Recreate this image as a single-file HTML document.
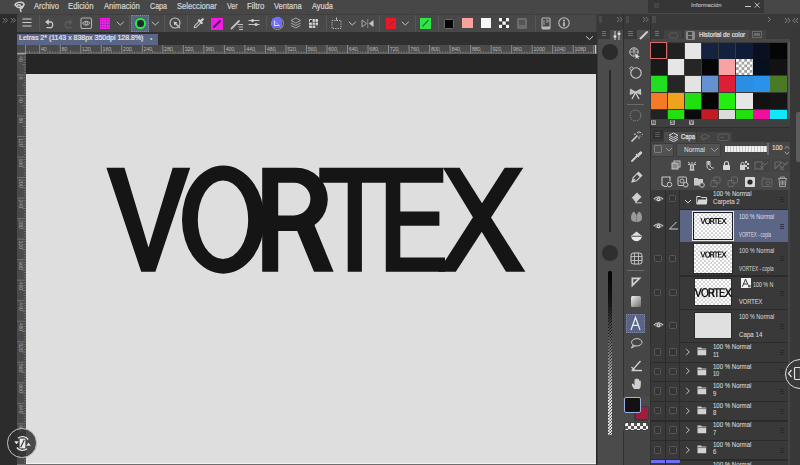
<!DOCTYPE html><html><head><meta charset="utf-8"><style>
html,body{margin:0;padding:0;}
body{width:800px;height:465px;overflow:hidden;position:relative;background:#2c2c2c;font-family:"Liberation Sans",sans-serif;}
div{position:absolute;box-sizing:border-box;}
.t{white-space:nowrap;line-height:1;}
</style></head><body>
<div style="left:0px;top:0px;width:800px;height:13.5px;background:#474747;"></div>
<div class="t" style="left:33.6px;top:2.15px;font-size:8.70px;color:#d6d6d6;-webkit-text-stroke:0.2px #d6d6d6;transform:scaleX(0.855);transform-origin:0 0;">Archivo</div>
<div class="t" style="left:68px;top:2.15px;font-size:8.70px;color:#d6d6d6;-webkit-text-stroke:0.2px #d6d6d6;transform:scaleX(0.894);transform-origin:0 0;">Edición</div>
<div class="t" style="left:103.5px;top:2.15px;font-size:8.70px;color:#d6d6d6;-webkit-text-stroke:0.2px #d6d6d6;transform:scaleX(0.879);transform-origin:0 0;">Animación</div>
<div class="t" style="left:149.8px;top:2.15px;font-size:8.70px;color:#d6d6d6;-webkit-text-stroke:0.2px #d6d6d6;transform:scaleX(0.818);transform-origin:0 0;">Capa</div>
<div class="t" style="left:176.7px;top:2.15px;font-size:8.70px;color:#d6d6d6;-webkit-text-stroke:0.2px #d6d6d6;transform:scaleX(0.878);transform-origin:0 0;">Seleccionar</div>
<div class="t" style="left:226.6px;top:2.15px;font-size:8.70px;color:#d6d6d6;-webkit-text-stroke:0.2px #d6d6d6;transform:scaleX(0.812);transform-origin:0 0;">Ver</div>
<div class="t" style="left:247.4px;top:2.15px;font-size:8.70px;color:#d6d6d6;-webkit-text-stroke:0.2px #d6d6d6;transform:scaleX(0.906);transform-origin:0 0;">Filtro</div>
<div class="t" style="left:274.4px;top:2.15px;font-size:8.70px;color:#d6d6d6;-webkit-text-stroke:0.2px #d6d6d6;transform:scaleX(0.865);transform-origin:0 0;">Ventana</div>
<div class="t" style="left:312px;top:2.15px;font-size:8.70px;color:#d6d6d6;-webkit-text-stroke:0.2px #d6d6d6;transform:scaleX(0.853);transform-origin:0 0;">Ayuda</div>
<svg style="position:absolute;left:5px;top:0px;" width="20" height="14" viewBox="0 0 20 14"><path d="M15.4,5.2 C13.6,4.4 11.4,5.2 11.7,6.5 C12.1,8 16.8,7.6 18.6,5.6 C20,3.8 17.6,2 14.8,2.2 C11.6,2.4 9.6,4 10.3,5.6 M18.2,6.2 C17.6,8 16.2,8.6 15.2,9 L16,11.6" fill="none" stroke="#d2d2d2" stroke-width="1.5" stroke-linecap="round" stroke-linejoin="round"/></svg>
<div style="left:0px;top:13.5px;width:17.3px;height:452px;background:#2c2c2c;"></div>
<svg style="position:absolute;left:1.5px;top:17px;" width="16" height="7" viewBox="0 0 16 7"><path d="M0.8 1 L3 3.3 L0.8 5.6 M3.3 1 L5.5 3.3 L3.3 5.6 M8.8 1 L11 3.3 L8.8 5.6 M11.3 1 L13.5 3.3 L11.3 5.6" fill="none" stroke="#8a8a8a" stroke-width="0.8"/></svg>
<div style="left:17.3px;top:13.5px;width:579.7px;height:18.8px;background:#484848;border-top:1px solid #3e3e3e;border-right:1px solid #3e3e3e;"></div>
<div style="left:39px;top:15px;width:0.8px;height:16px;background:#575757;"></div>
<div style="left:128.5px;top:15px;width:0.8px;height:16px;background:#575757;"></div>
<div style="left:163.5px;top:15px;width:0.8px;height:16px;background:#575757;"></div>
<div style="left:186.5px;top:15px;width:0.8px;height:16px;background:#575757;"></div>
<div style="left:265.5px;top:15px;width:0.8px;height:16px;background:#575757;"></div>
<div style="left:326px;top:15px;width:0.8px;height:16px;background:#575757;"></div>
<div style="left:378.5px;top:15px;width:0.8px;height:16px;background:#575757;"></div>
<div style="left:414.5px;top:15px;width:0.8px;height:16px;background:#575757;"></div>
<div style="left:437.5px;top:15px;width:0.8px;height:16px;background:#575757;"></div>
<div style="left:534.5px;top:15px;width:0.8px;height:16px;background:#575757;"></div>
<svg style="position:absolute;left:21.5px;top:18px;" width="10" height="9" viewBox="0 0 10 9"><path d="M0.5 1 H9.5 M0.5 4.5 H9.5 M0.5 8 H9.5" stroke="#cfcfcf" stroke-width="1.2"/></svg>
<svg style="position:absolute;left:43.5px;top:16.5px;" width="13" height="12" viewBox="0 0 13 12"><path d="M3 5 H7.5 A3.7 3.7 0 0 1 7.5 10.6 H2.5" fill="none" stroke="#c8c8c8" stroke-width="1.3"/><path d="M1 5 L4.8 2 V8 Z" fill="#c8c8c8"/></svg>
<svg style="position:absolute;left:60.5px;top:16.5px;" width="13" height="12" viewBox="0 0 13 12"><path d="M10 5 H5.5 A3.7 3.7 0 0 0 5.5 10.6 H10.5" fill="none" stroke="#5e5e5e" stroke-width="1.3"/><path d="M12 5 L8.2 2 V8 Z" fill="#5e5e5e"/></svg>
<svg style="position:absolute;left:80px;top:17px;" width="12.5" height="12" viewBox="0 0 12.5 12"><rect x="1" y="1" width="10.5" height="10.5" rx="1.5" fill="none" stroke="#b0b0b0" stroke-width="1.1"/><path d="M2.5 6.2 Q6.25 2.2 10 6.2 Q6.25 10.2 2.5 6.2 Z" fill="none" stroke="#b8b8b8" stroke-width="1"/><circle cx="6.25" cy="6.2" r="1.3" fill="none" stroke="#b8b8b8" stroke-width="0.9"/></svg>
<div style="left:99.5px;top:18px;width:10.5px;height:10.5px;background-color:#f41ee6;background-image:radial-gradient(circle,#5a2a8a 0.6px,transparent 0.9px);background-size:2.6px 2.6px;"></div>
<svg style="position:absolute;left:116px;top:21px;" width="9" height="5" viewBox="0 0 9 5"><path d="M0.8 0.8 L4.3 4 L7.8 0.8" fill="none" stroke="#c0c0c0" stroke-width="1"/></svg>
<svg style="position:absolute;left:151.2px;top:21px;" width="9" height="5" viewBox="0 0 9 5"><path d="M0.8 0.8 L4.3 4 L7.8 0.8" fill="none" stroke="#c0c0c0" stroke-width="1"/></svg>
<svg style="position:absolute;left:347.5px;top:21px;" width="9" height="5" viewBox="0 0 9 5"><path d="M0.8 0.8 L4.3 4 L7.8 0.8" fill="none" stroke="#c0c0c0" stroke-width="1"/></svg>
<svg style="position:absolute;left:401.3px;top:21px;" width="9" height="5" viewBox="0 0 9 5"><path d="M0.8 0.8 L4.3 4 L7.8 0.8" fill="none" stroke="#c0c0c0" stroke-width="1"/></svg>
<div style="left:131px;top:14.5px;width:18px;height:17px;background:#5a6585;border:1px dotted #7b86a8;"></div>
<div style="left:134.5px;top:18px;width:11.5px;height:11px;background:#4a6a48;"></div>
<div style="left:135px;top:18.3px;width:10.5px;height:10.5px;border-radius:50%;background:#25262e;border:2.3px solid #2ee84a;box-sizing:border-box;"></div>
<svg style="position:absolute;left:169px;top:16.5px;" width="13" height="13" viewBox="0 0 13 13"><circle cx="6" cy="6" r="5" fill="none" stroke="#c4c4c4" stroke-width="1.1"/><path d="M6.2 6.2 L11 11" stroke="#c8c8c8" stroke-width="1.3"/><path d="M4.6 4.6 L8.4 5.4 L5.4 8.4 Z" fill="#d0d0d0"/></svg>
<svg style="position:absolute;left:192.5px;top:17px;" width="12" height="12" viewBox="0 0 12 12"><path d="M1.2 10.8 L1.8 8.6 L6.6 3.8 L8.2 5.4 L3.4 10.2 Z" fill="none" stroke="#c4c4c4" stroke-width="1.1" stroke-linejoin="round"/><path d="M6 3.2 L8.8 6 M7.6 4.4 L9.8 2.2" stroke="#d0d0d0" stroke-width="2.2" stroke-linecap="round"/></svg>
<div style="left:211px;top:17.5px;width:12px;height:12px;background:#ee1ee0;"></div>
<svg style="position:absolute;left:211px;top:17.5px;" width="12" height="12" viewBox="0 0 12 12"><path d="M9.5 2.5 L2.5 9.5" stroke="#3a2060" stroke-width="1.8"/></svg>
<svg style="position:absolute;left:229.5px;top:17px;" width="14" height="13" viewBox="0 0 14 13"><path d="M1.5 11.5 L9 4" stroke="#c0c0c0" stroke-width="1.8" stroke-linecap="round"/><path d="M7.5 7.5 H13 M8.5 10 H13 M9 12.5 H13" stroke="#c0c0c0" stroke-width="1"/></svg>
<svg style="position:absolute;left:247.5px;top:18px;" width="12" height="9" viewBox="0 0 12 9"><path d="M0.5 2.5 H11.5 M0.5 6.5 H11.5" stroke="#c4c4c4" stroke-width="1"/><circle cx="4.5" cy="2.5" r="1.6" fill="#d0d0d0"/><circle cx="8" cy="6.5" r="1.6" fill="#d0d0d0"/></svg>
<div style="left:270.5px;top:17px;width:13px;height:13px;border-radius:50%;border:1px solid #9a9a9a;"></div>
<div style="left:272px;top:18.3px;width:10.2px;height:10.2px;background:#6e6cf8;border-radius:1.5px;"></div>
<svg style="position:absolute;left:273px;top:19.3px;" width="8" height="8" viewBox="0 0 8 8"><path d="M1.5 1.5 V6.5 H6.5" fill="none" stroke="#d8d8f8" stroke-width="1.2"/><path d="M2.5 3 L6 6" stroke="#b8b8ff" stroke-width="0.8"/></svg>
<svg style="position:absolute;left:289.5px;top:17px;" width="11.5" height="13" viewBox="0 0 11.5 13"><path d="M5.75 1 L10.5 3.5 L5.75 6 L1 3.5 Z M1 6 L5.75 8.5 L10.5 6 M1 8.5 L5.75 11 L10.5 8.5" fill="none" stroke="#a8a8a8" stroke-width="1"/></svg>
<div style="left:308.5px;top:18.5px;width:9.5px;height:9.5px;background:#d8d8d8;border-radius:1px;"></div>
<svg style="position:absolute;left:308.5px;top:18.5px;" width="9.5" height="9.5" viewBox="0 0 9.5 9.5"><path d="M3.3 0 V9.5 M6.3 0 V9.5 M0 3.3 H9.5 M0 6.3 H9.5" stroke="#505050" stroke-width="0.8"/><rect x="1" y="1" width="2" height="2" fill="#333"/><rect x="6.8" y="6.8" width="2" height="2" fill="#333"/></svg>
<svg style="position:absolute;left:331px;top:16.5px;" width="11.5" height="12.5" viewBox="0 0 11.5 12.5"><rect x="1" y="3.5" width="9" height="8" fill="none" stroke="#c0c0c0" stroke-width="1" stroke-dasharray="1.2 1.2"/><path d="M5.5 0.5 V3.5" stroke="#c0c0c0" stroke-width="1"/></svg>
<svg style="position:absolute;left:360.5px;top:18.5px;" width="13.5" height="9" viewBox="0 0 13.5 9"><path d="M1 1 L5.5 4.5 L1 8 Z" fill="none" stroke="#a8a8a8" stroke-width="1"/><path d="M6.75 0 V9" stroke="#888" stroke-width="1"/><path d="M12.5 1 L8 4.5 L12.5 8 Z" fill="#c8c8c8"/></svg>
<div style="left:385.5px;top:18px;width:10.5px;height:10.5px;background:#e81a2a;"></div>
<svg style="position:absolute;left:385.5px;top:18px;" width="10.5" height="10.5" viewBox="0 0 10.5 10.5"><path d="M7.5 3 L3 7.5" stroke="#8a1a40" stroke-width="1"/></svg>
<div style="left:420px;top:18px;width:11px;height:10.5px;background:#2ee646;"></div>
<svg style="position:absolute;left:420px;top:18px;" width="11" height="10.5" viewBox="0 0 11 10.5"><path d="M8.5 2 L2.5 8.5" stroke="#207a30" stroke-width="1.2"/></svg>
<div style="left:443.5px;top:18.5px;width:10.5px;height:10px;background:#050505;border:1px solid #6a6a6a;border-radius:1.5px;"></div>
<div style="left:462px;top:18.3px;width:10.5px;height:10.2px;background:#f8a2a0;"></div>
<div style="left:480.5px;top:18.3px;width:10.5px;height:10.2px;background:#f6f6f6;"></div>
<div style="left:499px;top:18px;width:10.2px;height:10.2px;background-color:#f4f4f4;background-image:linear-gradient(90deg,transparent 33.3%,#3a3a3a 33.3%,#3a3a3a 66.6%,transparent 66.6%);"></div>
<svg style="position:absolute;left:499px;top:18px;" width="10.2" height="10.2" viewBox="0 0 10.2 10.2"><rect x="0" y="3.4" width="3.4" height="3.4" fill="#3a3a3a"/><rect x="6.8" y="3.4" width="3.4" height="3.4" fill="#3a3a3a"/><rect x="3.4" y="3.4" width="3.4" height="3.4" fill="#f4f4f4"/></svg>
<div style="left:517px;top:18px;width:10.3px;height:10.5px;background:#6c6c6c;border-radius:1.5px;"></div>
<div style="left:519px;top:19.8px;width:6.3px;height:5px;background:#555;"></div>
<svg style="position:absolute;left:540.5px;top:16.5px;" width="10" height="13" viewBox="0 0 10 13"><rect x="1" y="1" width="8" height="11" rx="1" fill="none" stroke="#b8b8b8" stroke-width="1.1"/><rect x="1" y="9.5" width="8" height="2.5" fill="#b8b8b8"/><path d="M3 3 V8 M5 3 H7 V5 H5" fill="none" stroke="#b0b0b0" stroke-width="0.9"/></svg>
<svg style="position:absolute;left:557.5px;top:17px;" width="12" height="12" viewBox="0 0 12 12"><circle cx="6" cy="6" r="5.2" fill="none" stroke="#c0c0c0" stroke-width="1.1"/><circle cx="6" cy="3.5" r="0.9" fill="#d0d0d0"/><path d="M6 5.2 V9.3" stroke="#d0d0d0" stroke-width="1.6"/></svg>
<div style="left:17.3px;top:32.3px;width:579.7px;height:12.7px;background:#303030;"></div>
<div style="left:17px;top:33.6px;width:141px;height:11.4px;background:#5b6585;"></div>
<div class="t" style="left:19px;top:35.00px;font-size:7.10px;color:#e4e6ee;-webkit-text-stroke:0.2px #e4e6ee;transform:scaleX(0.984);transform-origin:0 0;">Letras 2* (1143 x 838px 350dpi 128.8%)</div>
<div class="t" style="left:150px;top:35.2px;font-size:7px;color:#c8ccd8;">&#8226;</div>
<svg style="position:absolute;left:585px;top:35px;" width="9" height="6" viewBox="0 0 9 6"><path d="M1 1.2 L4.5 4.6 L8 1.2" fill="none" stroke="#cfcfcf" stroke-width="1"/></svg>
<div style="left:17.3px;top:45px;width:579.7px;height:8.5px;background:#4a4a4a;"></div>
<div style="left:17.3px;top:53.3px;width:8.5px;height:412px;background:#4a4a4a;"></div>
<svg style="position:absolute;left:0px;top:0px;pointer-events:none;" width="800" height="465" viewBox="0 0 800 465"><path d="M26.88 51.5 V53" stroke="#8c8c8c" stroke-width="0.6"/><path d="M29.44 50.5 V53" stroke="#9a9a9a" stroke-width="0.6"/><path d="M32.01 51.5 V53" stroke="#8c8c8c" stroke-width="0.6"/><path d="M34.57 51.5 V53" stroke="#8c8c8c" stroke-width="0.6"/><path d="M37.14 51.5 V53" stroke="#8c8c8c" stroke-width="0.6"/><path d="M39.70 45 V53.5" stroke="#a8a8a8" stroke-width="0.7"/><path d="M42.27 51.5 V53" stroke="#8c8c8c" stroke-width="0.6"/><path d="M44.83 51.5 V53" stroke="#8c8c8c" stroke-width="0.6"/><path d="M47.40 51.5 V53" stroke="#8c8c8c" stroke-width="0.6"/><path d="M49.96 50.5 V53" stroke="#9a9a9a" stroke-width="0.6"/><path d="M52.53 51.5 V53" stroke="#8c8c8c" stroke-width="0.6"/><path d="M55.09 51.5 V53" stroke="#8c8c8c" stroke-width="0.6"/><path d="M57.66 51.5 V53" stroke="#8c8c8c" stroke-width="0.6"/><text x="41.00" y="50.6" font-size="5.4" fill="#b4b4b4" font-family="Liberation Sans" letter-spacing="-0.15">40</text><path d="M60.22 45 V53.5" stroke="#a8a8a8" stroke-width="0.7"/><path d="M62.78 51.5 V53" stroke="#8c8c8c" stroke-width="0.6"/><path d="M65.35 51.5 V53" stroke="#8c8c8c" stroke-width="0.6"/><path d="M67.91 51.5 V53" stroke="#8c8c8c" stroke-width="0.6"/><path d="M70.48 50.5 V53" stroke="#9a9a9a" stroke-width="0.6"/><path d="M73.05 51.5 V53" stroke="#8c8c8c" stroke-width="0.6"/><path d="M75.61 51.5 V53" stroke="#8c8c8c" stroke-width="0.6"/><path d="M78.17 51.5 V53" stroke="#8c8c8c" stroke-width="0.6"/><text x="61.52" y="50.6" font-size="5.4" fill="#b4b4b4" font-family="Liberation Sans" letter-spacing="-0.15">80</text><path d="M80.74 45 V53.5" stroke="#a8a8a8" stroke-width="0.7"/><path d="M83.31 51.5 V53" stroke="#8c8c8c" stroke-width="0.6"/><path d="M85.87 51.5 V53" stroke="#8c8c8c" stroke-width="0.6"/><path d="M88.44 51.5 V53" stroke="#8c8c8c" stroke-width="0.6"/><path d="M91.00 50.5 V53" stroke="#9a9a9a" stroke-width="0.6"/><path d="M93.57 51.5 V53" stroke="#8c8c8c" stroke-width="0.6"/><path d="M96.13 51.5 V53" stroke="#8c8c8c" stroke-width="0.6"/><path d="M98.70 51.5 V53" stroke="#8c8c8c" stroke-width="0.6"/><text x="82.04" y="50.6" font-size="5.4" fill="#b4b4b4" font-family="Liberation Sans" letter-spacing="-0.15">120</text><path d="M101.26 45 V53.5" stroke="#a8a8a8" stroke-width="0.7"/><path d="M103.83 51.5 V53" stroke="#8c8c8c" stroke-width="0.6"/><path d="M106.39 51.5 V53" stroke="#8c8c8c" stroke-width="0.6"/><path d="M108.96 51.5 V53" stroke="#8c8c8c" stroke-width="0.6"/><path d="M111.52 50.5 V53" stroke="#9a9a9a" stroke-width="0.6"/><path d="M114.09 51.5 V53" stroke="#8c8c8c" stroke-width="0.6"/><path d="M116.65 51.5 V53" stroke="#8c8c8c" stroke-width="0.6"/><path d="M119.22 51.5 V53" stroke="#8c8c8c" stroke-width="0.6"/><text x="102.56" y="50.6" font-size="5.4" fill="#b4b4b4" font-family="Liberation Sans" letter-spacing="-0.15">160</text><path d="M121.78 45 V53.5" stroke="#a8a8a8" stroke-width="0.7"/><path d="M124.34 51.5 V53" stroke="#8c8c8c" stroke-width="0.6"/><path d="M126.91 51.5 V53" stroke="#8c8c8c" stroke-width="0.6"/><path d="M129.47 51.5 V53" stroke="#8c8c8c" stroke-width="0.6"/><path d="M132.04 50.5 V53" stroke="#9a9a9a" stroke-width="0.6"/><path d="M134.60 51.5 V53" stroke="#8c8c8c" stroke-width="0.6"/><path d="M137.17 51.5 V53" stroke="#8c8c8c" stroke-width="0.6"/><path d="M139.74 51.5 V53" stroke="#8c8c8c" stroke-width="0.6"/><text x="123.08" y="50.6" font-size="5.4" fill="#b4b4b4" font-family="Liberation Sans" letter-spacing="-0.15">200</text><path d="M142.30 45 V53.5" stroke="#a8a8a8" stroke-width="0.7"/><path d="M144.87 51.5 V53" stroke="#8c8c8c" stroke-width="0.6"/><path d="M147.43 51.5 V53" stroke="#8c8c8c" stroke-width="0.6"/><path d="M150.00 51.5 V53" stroke="#8c8c8c" stroke-width="0.6"/><path d="M152.56 50.5 V53" stroke="#9a9a9a" stroke-width="0.6"/><path d="M155.12 51.5 V53" stroke="#8c8c8c" stroke-width="0.6"/><path d="M157.69 51.5 V53" stroke="#8c8c8c" stroke-width="0.6"/><path d="M160.25 51.5 V53" stroke="#8c8c8c" stroke-width="0.6"/><text x="143.60" y="50.6" font-size="5.4" fill="#b4b4b4" font-family="Liberation Sans" letter-spacing="-0.15">240</text><path d="M162.82 45 V53.5" stroke="#a8a8a8" stroke-width="0.7"/><path d="M165.38 51.5 V53" stroke="#8c8c8c" stroke-width="0.6"/><path d="M167.95 51.5 V53" stroke="#8c8c8c" stroke-width="0.6"/><path d="M170.51 51.5 V53" stroke="#8c8c8c" stroke-width="0.6"/><path d="M173.08 50.5 V53" stroke="#9a9a9a" stroke-width="0.6"/><path d="M175.64 51.5 V53" stroke="#8c8c8c" stroke-width="0.6"/><path d="M178.21 51.5 V53" stroke="#8c8c8c" stroke-width="0.6"/><path d="M180.77 51.5 V53" stroke="#8c8c8c" stroke-width="0.6"/><text x="164.12" y="50.6" font-size="5.4" fill="#b4b4b4" font-family="Liberation Sans" letter-spacing="-0.15">280</text><path d="M183.34 45 V53.5" stroke="#a8a8a8" stroke-width="0.7"/><path d="M185.91 51.5 V53" stroke="#8c8c8c" stroke-width="0.6"/><path d="M188.47 51.5 V53" stroke="#8c8c8c" stroke-width="0.6"/><path d="M191.03 51.5 V53" stroke="#8c8c8c" stroke-width="0.6"/><path d="M193.60 50.5 V53" stroke="#9a9a9a" stroke-width="0.6"/><path d="M196.16 51.5 V53" stroke="#8c8c8c" stroke-width="0.6"/><path d="M198.73 51.5 V53" stroke="#8c8c8c" stroke-width="0.6"/><path d="M201.30 51.5 V53" stroke="#8c8c8c" stroke-width="0.6"/><text x="184.64" y="50.6" font-size="5.4" fill="#b4b4b4" font-family="Liberation Sans" letter-spacing="-0.15">320</text><path d="M203.86 45 V53.5" stroke="#a8a8a8" stroke-width="0.7"/><path d="M206.43 51.5 V53" stroke="#8c8c8c" stroke-width="0.6"/><path d="M208.99 51.5 V53" stroke="#8c8c8c" stroke-width="0.6"/><path d="M211.56 51.5 V53" stroke="#8c8c8c" stroke-width="0.6"/><path d="M214.12 50.5 V53" stroke="#9a9a9a" stroke-width="0.6"/><path d="M216.69 51.5 V53" stroke="#8c8c8c" stroke-width="0.6"/><path d="M219.25 51.5 V53" stroke="#8c8c8c" stroke-width="0.6"/><path d="M221.81 51.5 V53" stroke="#8c8c8c" stroke-width="0.6"/><text x="205.16" y="50.6" font-size="5.4" fill="#b4b4b4" font-family="Liberation Sans" letter-spacing="-0.15">360</text><path d="M224.38 45 V53.5" stroke="#a8a8a8" stroke-width="0.7"/><path d="M226.94 51.5 V53" stroke="#8c8c8c" stroke-width="0.6"/><path d="M229.51 51.5 V53" stroke="#8c8c8c" stroke-width="0.6"/><path d="M232.07 51.5 V53" stroke="#8c8c8c" stroke-width="0.6"/><path d="M234.64 50.5 V53" stroke="#9a9a9a" stroke-width="0.6"/><path d="M237.20 51.5 V53" stroke="#8c8c8c" stroke-width="0.6"/><path d="M239.77 51.5 V53" stroke="#8c8c8c" stroke-width="0.6"/><path d="M242.33 51.5 V53" stroke="#8c8c8c" stroke-width="0.6"/><text x="225.68" y="50.6" font-size="5.4" fill="#b4b4b4" font-family="Liberation Sans" letter-spacing="-0.15">400</text><path d="M244.90 45 V53.5" stroke="#a8a8a8" stroke-width="0.7"/><path d="M247.47 51.5 V53" stroke="#8c8c8c" stroke-width="0.6"/><path d="M250.03 51.5 V53" stroke="#8c8c8c" stroke-width="0.6"/><path d="M252.59 51.5 V53" stroke="#8c8c8c" stroke-width="0.6"/><path d="M255.16 50.5 V53" stroke="#9a9a9a" stroke-width="0.6"/><path d="M257.73 51.5 V53" stroke="#8c8c8c" stroke-width="0.6"/><path d="M260.29 51.5 V53" stroke="#8c8c8c" stroke-width="0.6"/><path d="M262.86 51.5 V53" stroke="#8c8c8c" stroke-width="0.6"/><text x="246.20" y="50.6" font-size="5.4" fill="#b4b4b4" font-family="Liberation Sans" letter-spacing="-0.15">440</text><path d="M265.42 45 V53.5" stroke="#a8a8a8" stroke-width="0.7"/><path d="M267.99 51.5 V53" stroke="#8c8c8c" stroke-width="0.6"/><path d="M270.55 51.5 V53" stroke="#8c8c8c" stroke-width="0.6"/><path d="M273.12 51.5 V53" stroke="#8c8c8c" stroke-width="0.6"/><path d="M275.68 50.5 V53" stroke="#9a9a9a" stroke-width="0.6"/><path d="M278.25 51.5 V53" stroke="#8c8c8c" stroke-width="0.6"/><path d="M280.81 51.5 V53" stroke="#8c8c8c" stroke-width="0.6"/><path d="M283.38 51.5 V53" stroke="#8c8c8c" stroke-width="0.6"/><text x="266.72" y="50.6" font-size="5.4" fill="#b4b4b4" font-family="Liberation Sans" letter-spacing="-0.15">480</text><path d="M285.94 45 V53.5" stroke="#a8a8a8" stroke-width="0.7"/><path d="M288.50 51.5 V53" stroke="#8c8c8c" stroke-width="0.6"/><path d="M291.07 51.5 V53" stroke="#8c8c8c" stroke-width="0.6"/><path d="M293.63 51.5 V53" stroke="#8c8c8c" stroke-width="0.6"/><path d="M296.20 50.5 V53" stroke="#9a9a9a" stroke-width="0.6"/><path d="M298.76 51.5 V53" stroke="#8c8c8c" stroke-width="0.6"/><path d="M301.33 51.5 V53" stroke="#8c8c8c" stroke-width="0.6"/><path d="M303.89 51.5 V53" stroke="#8c8c8c" stroke-width="0.6"/><text x="287.24" y="50.6" font-size="5.4" fill="#b4b4b4" font-family="Liberation Sans" letter-spacing="-0.15">520</text><path d="M306.46 45 V53.5" stroke="#a8a8a8" stroke-width="0.7"/><path d="M309.02 51.5 V53" stroke="#8c8c8c" stroke-width="0.6"/><path d="M311.59 51.5 V53" stroke="#8c8c8c" stroke-width="0.6"/><path d="M314.15 51.5 V53" stroke="#8c8c8c" stroke-width="0.6"/><path d="M316.72 50.5 V53" stroke="#9a9a9a" stroke-width="0.6"/><path d="M319.28 51.5 V53" stroke="#8c8c8c" stroke-width="0.6"/><path d="M321.85 51.5 V53" stroke="#8c8c8c" stroke-width="0.6"/><path d="M324.41 51.5 V53" stroke="#8c8c8c" stroke-width="0.6"/><text x="307.76" y="50.6" font-size="5.4" fill="#b4b4b4" font-family="Liberation Sans" letter-spacing="-0.15">560</text><path d="M326.98 45 V53.5" stroke="#a8a8a8" stroke-width="0.7"/><path d="M329.55 51.5 V53" stroke="#8c8c8c" stroke-width="0.6"/><path d="M332.11 51.5 V53" stroke="#8c8c8c" stroke-width="0.6"/><path d="M334.68 51.5 V53" stroke="#8c8c8c" stroke-width="0.6"/><path d="M337.24 50.5 V53" stroke="#9a9a9a" stroke-width="0.6"/><path d="M339.81 51.5 V53" stroke="#8c8c8c" stroke-width="0.6"/><path d="M342.37 51.5 V53" stroke="#8c8c8c" stroke-width="0.6"/><path d="M344.94 51.5 V53" stroke="#8c8c8c" stroke-width="0.6"/><text x="328.28" y="50.6" font-size="5.4" fill="#b4b4b4" font-family="Liberation Sans" letter-spacing="-0.15">600</text><path d="M347.50 45 V53.5" stroke="#a8a8a8" stroke-width="0.7"/><path d="M350.06 51.5 V53" stroke="#8c8c8c" stroke-width="0.6"/><path d="M352.63 51.5 V53" stroke="#8c8c8c" stroke-width="0.6"/><path d="M355.19 51.5 V53" stroke="#8c8c8c" stroke-width="0.6"/><path d="M357.76 50.5 V53" stroke="#9a9a9a" stroke-width="0.6"/><path d="M360.32 51.5 V53" stroke="#8c8c8c" stroke-width="0.6"/><path d="M362.89 51.5 V53" stroke="#8c8c8c" stroke-width="0.6"/><path d="M365.45 51.5 V53" stroke="#8c8c8c" stroke-width="0.6"/><text x="348.80" y="50.6" font-size="5.4" fill="#b4b4b4" font-family="Liberation Sans" letter-spacing="-0.15">640</text><path d="M368.02 45 V53.5" stroke="#a8a8a8" stroke-width="0.7"/><path d="M370.58 51.5 V53" stroke="#8c8c8c" stroke-width="0.6"/><path d="M373.15 51.5 V53" stroke="#8c8c8c" stroke-width="0.6"/><path d="M375.71 51.5 V53" stroke="#8c8c8c" stroke-width="0.6"/><path d="M378.28 50.5 V53" stroke="#9a9a9a" stroke-width="0.6"/><path d="M380.84 51.5 V53" stroke="#8c8c8c" stroke-width="0.6"/><path d="M383.41 51.5 V53" stroke="#8c8c8c" stroke-width="0.6"/><path d="M385.97 51.5 V53" stroke="#8c8c8c" stroke-width="0.6"/><text x="369.32" y="50.6" font-size="5.4" fill="#b4b4b4" font-family="Liberation Sans" letter-spacing="-0.15">680</text><path d="M388.54 45 V53.5" stroke="#a8a8a8" stroke-width="0.7"/><path d="M391.11 51.5 V53" stroke="#8c8c8c" stroke-width="0.6"/><path d="M393.67 51.5 V53" stroke="#8c8c8c" stroke-width="0.6"/><path d="M396.24 51.5 V53" stroke="#8c8c8c" stroke-width="0.6"/><path d="M398.80 50.5 V53" stroke="#9a9a9a" stroke-width="0.6"/><path d="M401.37 51.5 V53" stroke="#8c8c8c" stroke-width="0.6"/><path d="M403.93 51.5 V53" stroke="#8c8c8c" stroke-width="0.6"/><path d="M406.50 51.5 V53" stroke="#8c8c8c" stroke-width="0.6"/><text x="389.84" y="50.6" font-size="5.4" fill="#b4b4b4" font-family="Liberation Sans" letter-spacing="-0.15">720</text><path d="M409.06 45 V53.5" stroke="#a8a8a8" stroke-width="0.7"/><path d="M411.62 51.5 V53" stroke="#8c8c8c" stroke-width="0.6"/><path d="M414.19 51.5 V53" stroke="#8c8c8c" stroke-width="0.6"/><path d="M416.75 51.5 V53" stroke="#8c8c8c" stroke-width="0.6"/><path d="M419.32 50.5 V53" stroke="#9a9a9a" stroke-width="0.6"/><path d="M421.88 51.5 V53" stroke="#8c8c8c" stroke-width="0.6"/><path d="M424.45 51.5 V53" stroke="#8c8c8c" stroke-width="0.6"/><path d="M427.01 51.5 V53" stroke="#8c8c8c" stroke-width="0.6"/><text x="410.36" y="50.6" font-size="5.4" fill="#b4b4b4" font-family="Liberation Sans" letter-spacing="-0.15">760</text><path d="M429.58 45 V53.5" stroke="#a8a8a8" stroke-width="0.7"/><path d="M432.14 51.5 V53" stroke="#8c8c8c" stroke-width="0.6"/><path d="M434.71 51.5 V53" stroke="#8c8c8c" stroke-width="0.6"/><path d="M437.27 51.5 V53" stroke="#8c8c8c" stroke-width="0.6"/><path d="M439.84 50.5 V53" stroke="#9a9a9a" stroke-width="0.6"/><path d="M442.40 51.5 V53" stroke="#8c8c8c" stroke-width="0.6"/><path d="M444.97 51.5 V53" stroke="#8c8c8c" stroke-width="0.6"/><path d="M447.53 51.5 V53" stroke="#8c8c8c" stroke-width="0.6"/><text x="430.88" y="50.6" font-size="5.4" fill="#b4b4b4" font-family="Liberation Sans" letter-spacing="-0.15">800</text><path d="M450.10 45 V53.5" stroke="#a8a8a8" stroke-width="0.7"/><path d="M452.67 51.5 V53" stroke="#8c8c8c" stroke-width="0.6"/><path d="M455.23 51.5 V53" stroke="#8c8c8c" stroke-width="0.6"/><path d="M457.80 51.5 V53" stroke="#8c8c8c" stroke-width="0.6"/><path d="M460.36 50.5 V53" stroke="#9a9a9a" stroke-width="0.6"/><path d="M462.93 51.5 V53" stroke="#8c8c8c" stroke-width="0.6"/><path d="M465.49 51.5 V53" stroke="#8c8c8c" stroke-width="0.6"/><path d="M468.06 51.5 V53" stroke="#8c8c8c" stroke-width="0.6"/><text x="451.40" y="50.6" font-size="5.4" fill="#b4b4b4" font-family="Liberation Sans" letter-spacing="-0.15">840</text><path d="M470.62 45 V53.5" stroke="#a8a8a8" stroke-width="0.7"/><path d="M473.19 51.5 V53" stroke="#8c8c8c" stroke-width="0.6"/><path d="M475.75 51.5 V53" stroke="#8c8c8c" stroke-width="0.6"/><path d="M478.31 51.5 V53" stroke="#8c8c8c" stroke-width="0.6"/><path d="M480.88 50.5 V53" stroke="#9a9a9a" stroke-width="0.6"/><path d="M483.44 51.5 V53" stroke="#8c8c8c" stroke-width="0.6"/><path d="M486.01 51.5 V53" stroke="#8c8c8c" stroke-width="0.6"/><path d="M488.57 51.5 V53" stroke="#8c8c8c" stroke-width="0.6"/><text x="471.92" y="50.6" font-size="5.4" fill="#b4b4b4" font-family="Liberation Sans" letter-spacing="-0.15">880</text><path d="M491.14 45 V53.5" stroke="#a8a8a8" stroke-width="0.7"/><path d="M493.70 51.5 V53" stroke="#8c8c8c" stroke-width="0.6"/><path d="M496.27 51.5 V53" stroke="#8c8c8c" stroke-width="0.6"/><path d="M498.83 51.5 V53" stroke="#8c8c8c" stroke-width="0.6"/><path d="M501.40 50.5 V53" stroke="#9a9a9a" stroke-width="0.6"/><path d="M503.96 51.5 V53" stroke="#8c8c8c" stroke-width="0.6"/><path d="M506.53 51.5 V53" stroke="#8c8c8c" stroke-width="0.6"/><path d="M509.09 51.5 V53" stroke="#8c8c8c" stroke-width="0.6"/><text x="492.44" y="50.6" font-size="5.4" fill="#b4b4b4" font-family="Liberation Sans" letter-spacing="-0.15">920</text><path d="M511.66 45 V53.5" stroke="#a8a8a8" stroke-width="0.7"/><path d="M514.23 51.5 V53" stroke="#8c8c8c" stroke-width="0.6"/><path d="M516.79 51.5 V53" stroke="#8c8c8c" stroke-width="0.6"/><path d="M519.36 51.5 V53" stroke="#8c8c8c" stroke-width="0.6"/><path d="M521.92 50.5 V53" stroke="#9a9a9a" stroke-width="0.6"/><path d="M524.49 51.5 V53" stroke="#8c8c8c" stroke-width="0.6"/><path d="M527.05 51.5 V53" stroke="#8c8c8c" stroke-width="0.6"/><path d="M529.62 51.5 V53" stroke="#8c8c8c" stroke-width="0.6"/><text x="512.96" y="50.6" font-size="5.4" fill="#b4b4b4" font-family="Liberation Sans" letter-spacing="-0.15">960</text><path d="M532.18 45 V53.5" stroke="#a8a8a8" stroke-width="0.7"/><path d="M534.75 51.5 V53" stroke="#8c8c8c" stroke-width="0.6"/><path d="M537.31 51.5 V53" stroke="#8c8c8c" stroke-width="0.6"/><path d="M539.88 51.5 V53" stroke="#8c8c8c" stroke-width="0.6"/><path d="M542.44 50.5 V53" stroke="#9a9a9a" stroke-width="0.6"/><path d="M545.00 51.5 V53" stroke="#8c8c8c" stroke-width="0.6"/><path d="M547.57 51.5 V53" stroke="#8c8c8c" stroke-width="0.6"/><path d="M550.13 51.5 V53" stroke="#8c8c8c" stroke-width="0.6"/><text x="533.48" y="50.6" font-size="5.4" fill="#b4b4b4" font-family="Liberation Sans" letter-spacing="-0.15">1000</text><path d="M552.70 45 V53.5" stroke="#a8a8a8" stroke-width="0.7"/><path d="M555.26 51.5 V53" stroke="#8c8c8c" stroke-width="0.6"/><path d="M557.83 51.5 V53" stroke="#8c8c8c" stroke-width="0.6"/><path d="M560.39 51.5 V53" stroke="#8c8c8c" stroke-width="0.6"/><path d="M562.96 50.5 V53" stroke="#9a9a9a" stroke-width="0.6"/><path d="M565.52 51.5 V53" stroke="#8c8c8c" stroke-width="0.6"/><path d="M568.09 51.5 V53" stroke="#8c8c8c" stroke-width="0.6"/><path d="M570.65 51.5 V53" stroke="#8c8c8c" stroke-width="0.6"/><text x="554.00" y="50.6" font-size="5.4" fill="#b4b4b4" font-family="Liberation Sans" letter-spacing="-0.15">1040</text><path d="M573.22 45 V53.5" stroke="#a8a8a8" stroke-width="0.7"/><path d="M575.78 51.5 V53" stroke="#8c8c8c" stroke-width="0.6"/><path d="M578.35 51.5 V53" stroke="#8c8c8c" stroke-width="0.6"/><path d="M580.91 51.5 V53" stroke="#8c8c8c" stroke-width="0.6"/><path d="M583.48 50.5 V53" stroke="#9a9a9a" stroke-width="0.6"/><path d="M586.04 51.5 V53" stroke="#8c8c8c" stroke-width="0.6"/><path d="M588.61 51.5 V53" stroke="#8c8c8c" stroke-width="0.6"/><path d="M591.17 51.5 V53" stroke="#8c8c8c" stroke-width="0.6"/><text x="574.52" y="50.6" font-size="5.4" fill="#b4b4b4" font-family="Liberation Sans" letter-spacing="-0.15">1080</text><path d="M593.74 45 V53.5" stroke="#a8a8a8" stroke-width="0.7"/><path d="M25.8 53.2 H597" stroke="#8a8a8a" stroke-width="0.6"/><path d="M595.6 45 V53.5" stroke="#c8c8c8" stroke-width="1.2"/><path d="M25.5 45 V53.5" stroke="#a0a0a0" stroke-width="0.7"/><path d="M17.3 54.48 H25.8" stroke="#909090" stroke-width="0.6"/><path d="M23.8 57.05 H25.8" stroke="#8c8c8c" stroke-width="0.6"/><path d="M23.8 59.61 H25.8" stroke="#8c8c8c" stroke-width="0.6"/><path d="M23.8 62.18 H25.8" stroke="#8c8c8c" stroke-width="0.6"/><path d="M22.5 64.74 H25.8" stroke="#9a9a9a" stroke-width="0.6"/><path d="M23.8 67.31 H25.8" stroke="#8c8c8c" stroke-width="0.6"/><path d="M23.8 69.87 H25.8" stroke="#8c8c8c" stroke-width="0.6"/><path d="M23.8 72.44 H25.8" stroke="#8c8c8c" stroke-width="0.6"/><text transform="translate(18.9 55.88) rotate(90)" font-size="5.4" fill="#a4a4a4" font-family="Liberation Sans" letter-spacing="-0.15">40</text><path d="M17.3 75.00 H25.8" stroke="#909090" stroke-width="0.6"/><path d="M23.8 77.56 H25.8" stroke="#8c8c8c" stroke-width="0.6"/><path d="M23.8 80.13 H25.8" stroke="#8c8c8c" stroke-width="0.6"/><path d="M23.8 82.69 H25.8" stroke="#8c8c8c" stroke-width="0.6"/><path d="M22.5 85.26 H25.8" stroke="#9a9a9a" stroke-width="0.6"/><path d="M23.8 87.83 H25.8" stroke="#8c8c8c" stroke-width="0.6"/><path d="M23.8 90.39 H25.8" stroke="#8c8c8c" stroke-width="0.6"/><path d="M23.8 92.95 H25.8" stroke="#8c8c8c" stroke-width="0.6"/><text transform="translate(18.9 76.40) rotate(90)" font-size="5.4" fill="#a4a4a4" font-family="Liberation Sans" letter-spacing="-0.15">0</text><path d="M17.3 95.52 H25.8" stroke="#909090" stroke-width="0.6"/><path d="M23.8 98.09 H25.8" stroke="#8c8c8c" stroke-width="0.6"/><path d="M23.8 100.65 H25.8" stroke="#8c8c8c" stroke-width="0.6"/><path d="M23.8 103.22 H25.8" stroke="#8c8c8c" stroke-width="0.6"/><path d="M22.5 105.78 H25.8" stroke="#9a9a9a" stroke-width="0.6"/><path d="M23.8 108.35 H25.8" stroke="#8c8c8c" stroke-width="0.6"/><path d="M23.8 110.91 H25.8" stroke="#8c8c8c" stroke-width="0.6"/><path d="M23.8 113.48 H25.8" stroke="#8c8c8c" stroke-width="0.6"/><text transform="translate(18.9 96.92) rotate(90)" font-size="5.4" fill="#a4a4a4" font-family="Liberation Sans" letter-spacing="-0.15">40</text><path d="M17.3 116.04 H25.8" stroke="#909090" stroke-width="0.6"/><path d="M23.8 118.61 H25.8" stroke="#8c8c8c" stroke-width="0.6"/><path d="M23.8 121.17 H25.8" stroke="#8c8c8c" stroke-width="0.6"/><path d="M23.8 123.74 H25.8" stroke="#8c8c8c" stroke-width="0.6"/><path d="M22.5 126.30 H25.8" stroke="#9a9a9a" stroke-width="0.6"/><path d="M23.8 128.87 H25.8" stroke="#8c8c8c" stroke-width="0.6"/><path d="M23.8 131.43 H25.8" stroke="#8c8c8c" stroke-width="0.6"/><path d="M23.8 134.00 H25.8" stroke="#8c8c8c" stroke-width="0.6"/><text transform="translate(18.9 117.44) rotate(90)" font-size="5.4" fill="#a4a4a4" font-family="Liberation Sans" letter-spacing="-0.15">80</text><path d="M17.3 136.56 H25.8" stroke="#909090" stroke-width="0.6"/><path d="M23.8 139.12 H25.8" stroke="#8c8c8c" stroke-width="0.6"/><path d="M23.8 141.69 H25.8" stroke="#8c8c8c" stroke-width="0.6"/><path d="M23.8 144.25 H25.8" stroke="#8c8c8c" stroke-width="0.6"/><path d="M22.5 146.82 H25.8" stroke="#9a9a9a" stroke-width="0.6"/><path d="M23.8 149.38 H25.8" stroke="#8c8c8c" stroke-width="0.6"/><path d="M23.8 151.95 H25.8" stroke="#8c8c8c" stroke-width="0.6"/><path d="M23.8 154.51 H25.8" stroke="#8c8c8c" stroke-width="0.6"/><text transform="translate(18.9 137.96) rotate(90)" font-size="5.4" fill="#a4a4a4" font-family="Liberation Sans" letter-spacing="-0.15">120</text><path d="M17.3 157.08 H25.8" stroke="#909090" stroke-width="0.6"/><path d="M23.8 159.64 H25.8" stroke="#8c8c8c" stroke-width="0.6"/><path d="M23.8 162.21 H25.8" stroke="#8c8c8c" stroke-width="0.6"/><path d="M23.8 164.77 H25.8" stroke="#8c8c8c" stroke-width="0.6"/><path d="M22.5 167.34 H25.8" stroke="#9a9a9a" stroke-width="0.6"/><path d="M23.8 169.90 H25.8" stroke="#8c8c8c" stroke-width="0.6"/><path d="M23.8 172.47 H25.8" stroke="#8c8c8c" stroke-width="0.6"/><path d="M23.8 175.03 H25.8" stroke="#8c8c8c" stroke-width="0.6"/><text transform="translate(18.9 158.48) rotate(90)" font-size="5.4" fill="#a4a4a4" font-family="Liberation Sans" letter-spacing="-0.15">160</text><path d="M17.3 177.60 H25.8" stroke="#909090" stroke-width="0.6"/><path d="M23.8 180.17 H25.8" stroke="#8c8c8c" stroke-width="0.6"/><path d="M23.8 182.73 H25.8" stroke="#8c8c8c" stroke-width="0.6"/><path d="M23.8 185.30 H25.8" stroke="#8c8c8c" stroke-width="0.6"/><path d="M22.5 187.86 H25.8" stroke="#9a9a9a" stroke-width="0.6"/><path d="M23.8 190.43 H25.8" stroke="#8c8c8c" stroke-width="0.6"/><path d="M23.8 192.99 H25.8" stroke="#8c8c8c" stroke-width="0.6"/><path d="M23.8 195.56 H25.8" stroke="#8c8c8c" stroke-width="0.6"/><text transform="translate(18.9 179.00) rotate(90)" font-size="5.4" fill="#a4a4a4" font-family="Liberation Sans" letter-spacing="-0.15">200</text><path d="M17.3 198.12 H25.8" stroke="#909090" stroke-width="0.6"/><path d="M23.8 200.69 H25.8" stroke="#8c8c8c" stroke-width="0.6"/><path d="M23.8 203.25 H25.8" stroke="#8c8c8c" stroke-width="0.6"/><path d="M23.8 205.81 H25.8" stroke="#8c8c8c" stroke-width="0.6"/><path d="M22.5 208.38 H25.8" stroke="#9a9a9a" stroke-width="0.6"/><path d="M23.8 210.94 H25.8" stroke="#8c8c8c" stroke-width="0.6"/><path d="M23.8 213.51 H25.8" stroke="#8c8c8c" stroke-width="0.6"/><path d="M23.8 216.07 H25.8" stroke="#8c8c8c" stroke-width="0.6"/><text transform="translate(18.9 199.52) rotate(90)" font-size="5.4" fill="#a4a4a4" font-family="Liberation Sans" letter-spacing="-0.15">240</text><path d="M17.3 218.64 H25.8" stroke="#909090" stroke-width="0.6"/><path d="M23.8 221.20 H25.8" stroke="#8c8c8c" stroke-width="0.6"/><path d="M23.8 223.77 H25.8" stroke="#8c8c8c" stroke-width="0.6"/><path d="M23.8 226.33 H25.8" stroke="#8c8c8c" stroke-width="0.6"/><path d="M22.5 228.90 H25.8" stroke="#9a9a9a" stroke-width="0.6"/><path d="M23.8 231.46 H25.8" stroke="#8c8c8c" stroke-width="0.6"/><path d="M23.8 234.03 H25.8" stroke="#8c8c8c" stroke-width="0.6"/><path d="M23.8 236.59 H25.8" stroke="#8c8c8c" stroke-width="0.6"/><text transform="translate(18.9 220.04) rotate(90)" font-size="5.4" fill="#a4a4a4" font-family="Liberation Sans" letter-spacing="-0.15">280</text><path d="M17.3 239.16 H25.8" stroke="#909090" stroke-width="0.6"/><path d="M23.8 241.73 H25.8" stroke="#8c8c8c" stroke-width="0.6"/><path d="M23.8 244.29 H25.8" stroke="#8c8c8c" stroke-width="0.6"/><path d="M23.8 246.86 H25.8" stroke="#8c8c8c" stroke-width="0.6"/><path d="M22.5 249.42 H25.8" stroke="#9a9a9a" stroke-width="0.6"/><path d="M23.8 251.99 H25.8" stroke="#8c8c8c" stroke-width="0.6"/><path d="M23.8 254.55 H25.8" stroke="#8c8c8c" stroke-width="0.6"/><path d="M23.8 257.12 H25.8" stroke="#8c8c8c" stroke-width="0.6"/><text transform="translate(18.9 240.56) rotate(90)" font-size="5.4" fill="#a4a4a4" font-family="Liberation Sans" letter-spacing="-0.15">320</text><path d="M17.3 259.68 H25.8" stroke="#909090" stroke-width="0.6"/><path d="M23.8 262.25 H25.8" stroke="#8c8c8c" stroke-width="0.6"/><path d="M23.8 264.81 H25.8" stroke="#8c8c8c" stroke-width="0.6"/><path d="M23.8 267.38 H25.8" stroke="#8c8c8c" stroke-width="0.6"/><path d="M22.5 269.94 H25.8" stroke="#9a9a9a" stroke-width="0.6"/><path d="M23.8 272.50 H25.8" stroke="#8c8c8c" stroke-width="0.6"/><path d="M23.8 275.07 H25.8" stroke="#8c8c8c" stroke-width="0.6"/><path d="M23.8 277.63 H25.8" stroke="#8c8c8c" stroke-width="0.6"/><text transform="translate(18.9 261.08) rotate(90)" font-size="5.4" fill="#a4a4a4" font-family="Liberation Sans" letter-spacing="-0.15">360</text><path d="M17.3 280.20 H25.8" stroke="#909090" stroke-width="0.6"/><path d="M23.8 282.76 H25.8" stroke="#8c8c8c" stroke-width="0.6"/><path d="M23.8 285.33 H25.8" stroke="#8c8c8c" stroke-width="0.6"/><path d="M23.8 287.89 H25.8" stroke="#8c8c8c" stroke-width="0.6"/><path d="M22.5 290.46 H25.8" stroke="#9a9a9a" stroke-width="0.6"/><path d="M23.8 293.02 H25.8" stroke="#8c8c8c" stroke-width="0.6"/><path d="M23.8 295.59 H25.8" stroke="#8c8c8c" stroke-width="0.6"/><path d="M23.8 298.15 H25.8" stroke="#8c8c8c" stroke-width="0.6"/><text transform="translate(18.9 281.60) rotate(90)" font-size="5.4" fill="#a4a4a4" font-family="Liberation Sans" letter-spacing="-0.15">400</text><path d="M17.3 300.72 H25.8" stroke="#909090" stroke-width="0.6"/><path d="M23.8 303.29 H25.8" stroke="#8c8c8c" stroke-width="0.6"/><path d="M23.8 305.85 H25.8" stroke="#8c8c8c" stroke-width="0.6"/><path d="M23.8 308.42 H25.8" stroke="#8c8c8c" stroke-width="0.6"/><path d="M22.5 310.98 H25.8" stroke="#9a9a9a" stroke-width="0.6"/><path d="M23.8 313.55 H25.8" stroke="#8c8c8c" stroke-width="0.6"/><path d="M23.8 316.11 H25.8" stroke="#8c8c8c" stroke-width="0.6"/><path d="M23.8 318.68 H25.8" stroke="#8c8c8c" stroke-width="0.6"/><text transform="translate(18.9 302.12) rotate(90)" font-size="5.4" fill="#a4a4a4" font-family="Liberation Sans" letter-spacing="-0.15">440</text><path d="M17.3 321.24 H25.8" stroke="#909090" stroke-width="0.6"/><path d="M23.8 323.81 H25.8" stroke="#8c8c8c" stroke-width="0.6"/><path d="M23.8 326.37 H25.8" stroke="#8c8c8c" stroke-width="0.6"/><path d="M23.8 328.94 H25.8" stroke="#8c8c8c" stroke-width="0.6"/><path d="M22.5 331.50 H25.8" stroke="#9a9a9a" stroke-width="0.6"/><path d="M23.8 334.06 H25.8" stroke="#8c8c8c" stroke-width="0.6"/><path d="M23.8 336.63 H25.8" stroke="#8c8c8c" stroke-width="0.6"/><path d="M23.8 339.19 H25.8" stroke="#8c8c8c" stroke-width="0.6"/><text transform="translate(18.9 322.64) rotate(90)" font-size="5.4" fill="#a4a4a4" font-family="Liberation Sans" letter-spacing="-0.15">480</text><path d="M17.3 341.76 H25.8" stroke="#909090" stroke-width="0.6"/><path d="M23.8 344.32 H25.8" stroke="#8c8c8c" stroke-width="0.6"/><path d="M23.8 346.89 H25.8" stroke="#8c8c8c" stroke-width="0.6"/><path d="M23.8 349.45 H25.8" stroke="#8c8c8c" stroke-width="0.6"/><path d="M22.5 352.02 H25.8" stroke="#9a9a9a" stroke-width="0.6"/><path d="M23.8 354.58 H25.8" stroke="#8c8c8c" stroke-width="0.6"/><path d="M23.8 357.15 H25.8" stroke="#8c8c8c" stroke-width="0.6"/><path d="M23.8 359.71 H25.8" stroke="#8c8c8c" stroke-width="0.6"/><text transform="translate(18.9 343.16) rotate(90)" font-size="5.4" fill="#a4a4a4" font-family="Liberation Sans" letter-spacing="-0.15">520</text><path d="M17.3 362.28 H25.8" stroke="#909090" stroke-width="0.6"/><path d="M23.8 364.85 H25.8" stroke="#8c8c8c" stroke-width="0.6"/><path d="M23.8 367.41 H25.8" stroke="#8c8c8c" stroke-width="0.6"/><path d="M23.8 369.98 H25.8" stroke="#8c8c8c" stroke-width="0.6"/><path d="M22.5 372.54 H25.8" stroke="#9a9a9a" stroke-width="0.6"/><path d="M23.8 375.11 H25.8" stroke="#8c8c8c" stroke-width="0.6"/><path d="M23.8 377.67 H25.8" stroke="#8c8c8c" stroke-width="0.6"/><path d="M23.8 380.24 H25.8" stroke="#8c8c8c" stroke-width="0.6"/><text transform="translate(18.9 363.68) rotate(90)" font-size="5.4" fill="#a4a4a4" font-family="Liberation Sans" letter-spacing="-0.15">560</text><path d="M17.3 382.80 H25.8" stroke="#909090" stroke-width="0.6"/><path d="M23.8 385.37 H25.8" stroke="#8c8c8c" stroke-width="0.6"/><path d="M23.8 387.93 H25.8" stroke="#8c8c8c" stroke-width="0.6"/><path d="M23.8 390.50 H25.8" stroke="#8c8c8c" stroke-width="0.6"/><path d="M22.5 393.06 H25.8" stroke="#9a9a9a" stroke-width="0.6"/><path d="M23.8 395.62 H25.8" stroke="#8c8c8c" stroke-width="0.6"/><path d="M23.8 398.19 H25.8" stroke="#8c8c8c" stroke-width="0.6"/><path d="M23.8 400.75 H25.8" stroke="#8c8c8c" stroke-width="0.6"/><text transform="translate(18.9 384.20) rotate(90)" font-size="5.4" fill="#a4a4a4" font-family="Liberation Sans" letter-spacing="-0.15">600</text><path d="M17.3 403.32 H25.8" stroke="#909090" stroke-width="0.6"/><path d="M23.8 405.88 H25.8" stroke="#8c8c8c" stroke-width="0.6"/><path d="M23.8 408.45 H25.8" stroke="#8c8c8c" stroke-width="0.6"/><path d="M23.8 411.01 H25.8" stroke="#8c8c8c" stroke-width="0.6"/><path d="M22.5 413.58 H25.8" stroke="#9a9a9a" stroke-width="0.6"/><path d="M23.8 416.14 H25.8" stroke="#8c8c8c" stroke-width="0.6"/><path d="M23.8 418.71 H25.8" stroke="#8c8c8c" stroke-width="0.6"/><path d="M23.8 421.27 H25.8" stroke="#8c8c8c" stroke-width="0.6"/><text transform="translate(18.9 404.72) rotate(90)" font-size="5.4" fill="#a4a4a4" font-family="Liberation Sans" letter-spacing="-0.15">640</text><path d="M17.3 423.84 H25.8" stroke="#909090" stroke-width="0.6"/><path d="M23.8 426.41 H25.8" stroke="#8c8c8c" stroke-width="0.6"/><path d="M23.8 428.97 H25.8" stroke="#8c8c8c" stroke-width="0.6"/><path d="M23.8 431.54 H25.8" stroke="#8c8c8c" stroke-width="0.6"/><path d="M22.5 434.10 H25.8" stroke="#9a9a9a" stroke-width="0.6"/><path d="M23.8 436.67 H25.8" stroke="#8c8c8c" stroke-width="0.6"/><path d="M23.8 439.23 H25.8" stroke="#8c8c8c" stroke-width="0.6"/><path d="M23.8 441.80 H25.8" stroke="#8c8c8c" stroke-width="0.6"/><text transform="translate(18.9 425.24) rotate(90)" font-size="5.4" fill="#a4a4a4" font-family="Liberation Sans" letter-spacing="-0.15">680</text><path d="M17.3 444.36 H25.8" stroke="#909090" stroke-width="0.6"/><path d="M23.8 446.93 H25.8" stroke="#8c8c8c" stroke-width="0.6"/><path d="M23.8 449.49 H25.8" stroke="#8c8c8c" stroke-width="0.6"/><path d="M23.8 452.06 H25.8" stroke="#8c8c8c" stroke-width="0.6"/><path d="M22.5 454.62 H25.8" stroke="#9a9a9a" stroke-width="0.6"/><path d="M23.8 457.19 H25.8" stroke="#8c8c8c" stroke-width="0.6"/><path d="M23.8 459.75 H25.8" stroke="#8c8c8c" stroke-width="0.6"/><path d="M23.8 462.31 H25.8" stroke="#8c8c8c" stroke-width="0.6"/><text transform="translate(18.9 445.76) rotate(90)" font-size="5.4" fill="#a4a4a4" font-family="Liberation Sans" letter-spacing="-0.15">720</text><path d="M17.3 464.88 H25.8" stroke="#909090" stroke-width="0.6"/><path d="M23.8 467.44 H25.8" stroke="#8c8c8c" stroke-width="0.6"/><path d="M23.8 470.01 H25.8" stroke="#8c8c8c" stroke-width="0.6"/><path d="M23.8 472.57 H25.8" stroke="#8c8c8c" stroke-width="0.6"/><path d="M22.5 475.14 H25.8" stroke="#9a9a9a" stroke-width="0.6"/><path d="M23.8 477.70 H25.8" stroke="#8c8c8c" stroke-width="0.6"/><path d="M23.8 480.27 H25.8" stroke="#8c8c8c" stroke-width="0.6"/><path d="M23.8 482.83 H25.8" stroke="#8c8c8c" stroke-width="0.6"/><text transform="translate(18.9 466.28) rotate(90)" font-size="5.4" fill="#a4a4a4" font-family="Liberation Sans" letter-spacing="-0.15">760</text><path d="M17.3 53.3 H25.8" stroke="#c4c4c4" stroke-width="0.9"/></svg>
<div style="left:25.8px;top:53.5px;width:571px;height:412px;background:#262626;"></div>
<div style="left:25.8px;top:74px;width:570.4px;height:391px;background:#dedede;"></div>
<div style="left:596.5px;top:13.5px;width:203.5px;height:452px;background:#393939;"></div>
<div style="left:598.5px;top:16px;width:3.5px;height:7px;background:#4a4a4a;"></div>
<div style="left:625.5px;top:16px;width:3.5px;height:7px;background:#4a4a4a;"></div>
<div style="left:652px;top:16px;width:3.5px;height:7px;background:#4a4a4a;"></div>
<svg style="position:absolute;left:615.5px;top:16.3px;" width="8" height="7" viewBox="0 0 8 7"><path d="M1 1 L3.2 3.5 L1 6 M3.9 1 L6.1 3.5 L3.9 6" fill="none" stroke="#7a7a7a" stroke-width="0.9"/></svg>
<svg style="position:absolute;left:642px;top:16.3px;" width="8" height="7" viewBox="0 0 8 7"><path d="M1 1 L3.2 3.5 L1 6 M3.9 1 L6.1 3.5 L3.9 6" fill="none" stroke="#7a7a7a" stroke-width="0.9"/></svg>
<svg style="position:absolute;left:784px;top:16.5px;" width="8" height="7" viewBox="0 0 8 7"><path d="M1 1 L3.2 3.5 L1 6 M3.9 1 L6.1 3.5 L3.9 6" fill="none" stroke="#8a8a8a" stroke-width="0.9"/></svg>
<svg style="position:absolute;left:792.3px;top:16.5px;" width="8" height="7" viewBox="0 0 8 7"><path d="M3.2 1 L1 3.5 L3.2 6 M6.1 1 L3.9 3.5 L6.1 6" fill="none" stroke="#8a8a8a" stroke-width="0.9"/></svg>
<svg style="position:absolute;left:767px;top:16.3px;" width="5" height="7" viewBox="0 0 5 7"><path d="M1 1 L3.5 3.5 L1 6" fill="none" stroke="#8a8a8a" stroke-width="0.9"/></svg>
<div style="left:623.2px;top:13.5px;width:1px;height:452px;background:#2f2f2f;"></div>
<div style="left:650.2px;top:13.5px;width:1px;height:452px;background:#2f2f2f;"></div>
<div style="left:601.5px;top:31px;width:4.5px;height:0.8px;background:#707070;"></div>
<div style="left:601.5px;top:33px;width:4.5px;height:0.8px;background:#707070;"></div>
<div style="left:601.5px;top:35px;width:4.5px;height:0.8px;background:#707070;"></div>
<div style="left:610px;top:29.5px;width:13.2px;height:436px;background:#4b4b4b;"></div>
<div style="left:597.5px;top:38.6px;width:25.7px;height:426.4px;background:#4b4b4b;"></div>
<svg style="position:absolute;left:612px;top:30px;" width="10" height="11" viewBox="0 0 10 11"><path d="M3 1 V10 M7 1 V10" stroke="#d8d8d8" stroke-width="1"/><rect x="1.6" y="5.5" width="2.8" height="2" fill="#e8e8e8"/><rect x="5.6" y="2.8" width="2.8" height="2" fill="#e8e8e8"/></svg>
<div style="left:601.5px;top:43.6px;width:16.6px;height:16.6px;border-radius:50%;background:#2b2b2b;"></div>
<div style="left:601.5px;top:244.8px;width:16.6px;height:16.6px;border-radius:50%;background:#2f2f2f;"></div>
<div style="left:609px;top:69.6px;width:2px;height:162px;background:#2a2a2a;"></div>
<div style="left:608.3px;top:270.5px;width:3.6px;height:164px;border-radius:1.5px;background-color:#f2f2f2;background-image:linear-gradient(#050505,rgba(5,5,5,0.9) 20%,rgba(5,5,5,0) 80%),linear-gradient(45deg,#4a4a4a 25%,transparent 25%,transparent 75%,#4a4a4a 75%),linear-gradient(45deg,#4a4a4a 25%,transparent 25%,transparent 75%,#4a4a4a 75%);background-size:100% 100%,3px 3px,3px 3px;background-position:0 0,0 0,1.5px 1.5px;"></div>
<div style="left:628px;top:31px;width:4.5px;height:0.8px;background:#707070;"></div>
<div style="left:628px;top:33px;width:4.5px;height:0.8px;background:#707070;"></div>
<div style="left:628px;top:35px;width:4.5px;height:0.8px;background:#707070;"></div>
<div style="left:637px;top:29.5px;width:13.2px;height:9.2px;background:#4e4e4e;"></div>
<div style="left:624.2px;top:38.6px;width:26px;height:426.4px;background:#464646;"></div>
<svg style="position:absolute;left:639px;top:30px;" width="10" height="10" viewBox="0 0 10 10"><path d="M1.5 8.5 L8 2" stroke="#cfcfcf" stroke-width="2" stroke-linecap="round"/></svg>
<svg style="position:absolute;left:628.5px;top:46.5px;" width="12" height="12.5" viewBox="0 0 12 12.5"><circle cx="5" cy="5" r="4.2" fill="none" stroke="#cfcfcf" stroke-width="1"/><path d="M1 5 H9 M5 1 V9 M2.5 2.5 Q5 4 7.5 2.5" fill="none" stroke="#cfcfcf" stroke-width="0.7"/><path d="M6 6 L11.5 10 L9 10.3 L10.3 12.3 L9.3 12.6 L8 10.8 L6.3 12.3 Z" fill="#e0e0e0" stroke="#3a3a3a" stroke-width="0.4"/></svg>
<svg style="position:absolute;left:628.5px;top:66px;" width="13" height="13" viewBox="0 0 13 13"><circle cx="7" cy="7" r="5.2" fill="none" stroke="#cfcfcf" stroke-width="1.1"/><circle cx="2.6" cy="2.6" r="1.6" fill="#464646" stroke="#cfcfcf" stroke-width="0.9"/></svg>
<svg style="position:absolute;left:628.5px;top:87.5px;" width="13" height="12" viewBox="0 0 13 12"><path d="M6.5 4 L1.5 1.2 L1.2 6.5 Z M6.5 4 L11.5 1.2 L11.8 6.5 Z" fill="#bcbcbc" stroke="#cfcfcf" stroke-width="0.9" stroke-linejoin="round"/><path d="M6.5 4.5 L3 11 M6.5 4.5 L10 11" stroke="#cfcfcf" stroke-width="1.3"/></svg>
<div style="left:626.6px;top:104px;width:17.5px;height:0.8px;background:#6a6a6a;"></div>
<svg style="position:absolute;left:628.5px;top:108.5px;" width="13" height="13" viewBox="0 0 13 13"><circle cx="6.5" cy="6.5" r="5.4" fill="none" stroke="#a0a0a0" stroke-width="0.9" stroke-dasharray="1 1"/></svg>
<svg style="position:absolute;left:629.5px;top:129.5px;" width="13" height="13" viewBox="0 0 13 13"><path d="M1.5 11.5 L7.5 5.5" stroke="#cfcfcf" stroke-width="1.6"/><path d="M9 1 V3.5 M9 6.5 V9 M6.2 4.2 H3.8 M11.8 4.2 H14 M7 2 L8 3 M11 2 L10 3 M11 6.5 L10 5.5" stroke="#cfcfcf" stroke-width="0.9"/></svg>
<svg style="position:absolute;left:629.5px;top:149.5px;" width="13" height="13" viewBox="0 0 13 13"><path d="M2 11 L7.5 5.5" stroke="#cfcfcf" stroke-width="1.8" stroke-linecap="round"/><path d="M6 4 L9 7 M8 4.5 L10.5 2 A1.3 1.3 0 0 1 11.5 3 L9 5.5" fill="#cfcfcf" stroke="#cfcfcf" stroke-width="1.4"/></svg>
<svg style="position:absolute;left:629.5px;top:169.5px;" width="13" height="14" viewBox="0 0 13 14"><path d="M2 12 L3.2 7.5 L8.5 2.2 L11.8 5.5 L6.5 10.8 Z" fill="none" stroke="#cfcfcf" stroke-width="1.1"/><path d="M2 12 L4 8.5 L5.5 10 Z M8.5 2.2 L11.8 5.5 L10 7.3 L6.7 4 Z" fill="#cfcfcf"/></svg>
<svg style="position:absolute;left:629.5px;top:189.5px;" width="13" height="14" viewBox="0 0 13 14"><path d="M1.5 8 L7 2.5 L11.5 7 L6 12.5 Z" fill="#cfcfcf"/><path d="M1.5 8 L4 10.5" stroke="#464646" stroke-width="1"/><path d="M5 12.8 H12" stroke="#cfcfcf" stroke-width="0.9"/></svg>
<svg style="position:absolute;left:629.5px;top:209.5px;" width="13" height="13" viewBox="0 0 13 13"><path d="M1 8 Q1 3 4 1.5 L6.5 5 L9 1.5 Q12 3 12 8 Q12 12 6.5 12 Q1 12 1 8 Z" fill="#9a9a9a"/><path d="M6.5 5 L6.5 12" stroke="#6a6a6a" stroke-width="0.6"/></svg>
<svg style="position:absolute;left:629.5px;top:229.5px;" width="13" height="14" viewBox="0 0 13 14"><path d="M1 6 L6.5 1.5 L12 6 L6.5 10.5 Z" fill="#dcdcdc"/><path d="M1 6 L12 6 L11 9 Q6.5 13.5 2 9 Z" fill="#e8e8e8"/><path d="M1.5 6.3 H11.5" stroke="#464646" stroke-width="0.9"/></svg>
<svg style="position:absolute;left:629.5px;top:251.5px;" width="13" height="13" viewBox="0 0 13 13"><rect x="1" y="1" width="11" height="11" rx="2.5" fill="none" stroke="#cfcfcf" stroke-width="1"/><path d="M4.5 1 V12 M8.5 1 V12 M1 4.5 H12 M1 8.5 H12" stroke="#cfcfcf" stroke-width="0.8"/></svg>
<div style="left:626.6px;top:270.3px;width:17.5px;height:0.8px;background:#6a6a6a;"></div>
<svg style="position:absolute;left:629.5px;top:276px;" width="13" height="13" viewBox="0 0 13 13"><path d="M1.5 1.5 H11.5 L1.5 11.5 Z M3.3 3.3 V7.3 L7.3 3.3 Z" fill="#cfcfcf" fill-rule="evenodd"/></svg>
<div style="left:630.5px;top:296px;width:10px;height:10.5px;border-radius:1.5px;background:linear-gradient(135deg,#f0f0f0,#6e6e6e);"></div>
<div style="left:625.7px;top:313.7px;width:19px;height:19.6px;background:#5a6585;border:1px dotted #7b86a8;"></div>
<svg style="position:absolute;left:628.5px;top:314.5px;" width="13" height="18" viewBox="0 0 13 18"><path d="M2 15 L6.5 2.5 L11 15 M3.8 10.3 H9.2" fill="none" stroke="#e8eaf2" stroke-width="1.3"/></svg>
<svg style="position:absolute;left:629.5px;top:336.5px;" width="13" height="12" viewBox="0 0 13 12"><ellipse cx="6.8" cy="5.3" rx="5.2" ry="3.7" fill="none" stroke="#cfcfcf" stroke-width="1"/><path d="M3 8 L1.5 11 L5.5 8.8" fill="none" stroke="#cfcfcf" stroke-width="1"/></svg>
<svg style="position:absolute;left:629.5px;top:358.5px;" width="13" height="13" viewBox="0 0 13 13"><path d="M1.5 11.5 H12 M2.5 11 L10.5 2" stroke="#cfcfcf" stroke-width="1.3"/><path d="M1.5 8 L4.5 11" stroke="#cfcfcf" stroke-width="1.2"/></svg>
<svg style="position:absolute;left:629.5px;top:377px;" width="13" height="13" viewBox="0 0 13 13"><path d="M4 12 Q1.5 9 1.8 7 L3 6.5 L4.5 8.2 V2.5 Q5.2 1.5 6 2.5 V6 V1.8 Q6.8 0.9 7.6 1.8 V6 V2.5 Q8.4 1.6 9.2 2.5 V6.5 V4 Q10 3.2 10.8 4 V8.5 Q10.5 12 8.5 12 Z" fill="#cfcfcf"/></svg>
<div style="left:622.5px;top:395.5px;width:27.5px;height:36px;background:#4a4a4a;border-radius:3px;"></div>
<div style="left:634.3px;top:406px;width:14.5px;height:14.7px;background:#7a1a30;border:1.2px solid #3a3a3a;border-radius:2px;"></div>
<div style="left:635.5px;top:407.2px;width:12.1px;height:12.3px;background-image:radial-gradient(circle,#b02048 0.6px,transparent 0.9px);background-size:2px 2px;"></div>
<div style="left:624px;top:397px;width:16.7px;height:16px;background:#121212;border:1.2px solid #9fb0e0;border-radius:2px;"></div>
<div style="left:624.6px;top:423.4px;width:23.4px;height:6.2px;border-radius:1.5px;background-color:#f4f4f4;background-image:linear-gradient(45deg,#555 25%,transparent 25%,transparent 75%,#555 75%),linear-gradient(45deg,#555 25%,transparent 25%,transparent 75%,#555 75%);background-size:6px 6px;background-position:0 0,3px 3px;box-shadow:0 0 0 0.8px #3a3a3a;"></div>
<div style="left:654.5px;top:31px;width:4.5px;height:0.8px;background:#707070;"></div>
<div style="left:654.5px;top:33px;width:4.5px;height:0.8px;background:#707070;"></div>
<div style="left:654.5px;top:35px;width:4.5px;height:0.8px;background:#707070;"></div>
<div style="left:651.2px;top:38.6px;width:139px;height:88.4px;background:#474747;"></div>
<div style="left:664px;top:29.5px;width:17.5px;height:9.1px;background:#424242;"></div>
<div style="left:684px;top:29.5px;width:64.5px;height:9.1px;background:#4b4b4b;"></div>
<div style="left:749px;top:29.5px;width:16.5px;height:9.1px;background:#424242;"></div>
<svg style="position:absolute;left:667.5px;top:30.5px;" width="11" height="8" viewBox="0 0 11 8"><rect x="1.5" y="2" width="8" height="5" rx="1.5" fill="none" stroke="#5c5c5c" stroke-width="1"/></svg>
<div style="left:686px;top:31.2px;width:8.7px;height:8.8px;background:#8a8a8a;border-radius:1.5px;"></div>
<div style="left:688.2px;top:32.3px;width:4.3px;height:2.3px;background:#444;"></div>
<div style="left:688.2px;top:36.3px;width:4.3px;height:2.4px;background:#444;"></div>
<div class="t" style="left:698.8px;top:31.92px;font-size:6.96px;color:#e0e0e0;-webkit-text-stroke:0.2px #e0e0e0;transform:scaleX(0.892);transform-origin:0 0;">Historial de color</div>
<svg style="position:absolute;left:752px;top:31px;" width="10" height="7" viewBox="0 0 10 7"><rect x="0.5" y="0.5" width="9" height="6" fill="none" stroke="#6a6a6a" stroke-width="1"/><rect x="2" y="2" width="6" height="3" fill="#6a6a6a"/></svg>
<div style="left:650.2px;top:42.2px;width:137.5px;height:77.2px;background:#383838;"></div>
<div style="left:650.6px;top:42.6px;width:16.32px;height:16.0px;background:#141414;"></div>
<div style="left:667.72px;top:42.6px;width:16.32px;height:16.0px;background:#222222;"></div>
<div style="left:684.84px;top:42.6px;width:16.32px;height:16.0px;background:#e6e6e6;"></div>
<div style="left:701.96px;top:42.6px;width:16.32px;height:16.0px;background:#14233f;"></div>
<div style="left:719.08px;top:42.6px;width:16.32px;height:16.0px;background:#13213d;"></div>
<div style="left:736.2px;top:42.6px;width:16.32px;height:16.0px;background:#0f1c38;"></div>
<div style="left:753.32px;top:42.6px;width:16.32px;height:16.0px;background:#0a1020;"></div>
<div style="left:770.44px;top:42.6px;width:16.32px;height:16.0px;background:#050505;"></div>
<div style="left:650.6px;top:59.4px;width:16.32px;height:16.0px;background:#1a1a1a;"></div>
<div style="left:667.72px;top:59.4px;width:16.32px;height:16.0px;background:#e6e6e6;"></div>
<div style="left:684.84px;top:59.4px;width:16.32px;height:16.0px;background:#262626;"></div>
<div style="left:701.96px;top:59.4px;width:16.32px;height:16.0px;background:#060606;"></div>
<div style="left:719.08px;top:59.4px;width:16.32px;height:16.0px;background:#f8a3a3;"></div>
<div style="left:736.20px;top:59.40px;width:16.32px;height:16.00px;background-color:#fff;background-image:linear-gradient(45deg,#999 25%,transparent 25%,transparent 75%,#999 75%),linear-gradient(45deg,#999 25%,transparent 25%,transparent 75%,#999 75%);background-size:5.5px 5.5px;background-position:0 0,2.75px 2.75px;"></div>
<div style="left:753.32px;top:59.4px;width:16.32px;height:16.0px;background:#07101f;"></div>
<div style="left:770.44px;top:59.4px;width:16.32px;height:16.0px;background:#121212;"></div>
<div style="left:650.6px;top:76.2px;width:16.32px;height:16.0px;background:#23dd1f;"></div>
<div style="left:667.72px;top:76.2px;width:16.32px;height:16.0px;background:#262626;"></div>
<div style="left:684.84px;top:76.2px;width:16.32px;height:16.0px;background:#e3e3e3;"></div>
<div style="left:701.96px;top:76.2px;width:16.32px;height:16.0px;background:#6492d0;"></div>
<div style="left:719.08px;top:76.2px;width:16.32px;height:16.0px;background:#dc1f36;"></div>
<div style="left:736.2px;top:76.2px;width:16.32px;height:16.0px;background:#2a8fe2;"></div>
<div style="left:753.32px;top:76.2px;width:16.32px;height:16.0px;background:#2a92ea;"></div>
<div style="left:770.44px;top:76.2px;width:16.32px;height:16.0px;background:#4b7a26;"></div>
<div style="left:650.6px;top:93.0px;width:16.32px;height:16.0px;background:#f57a25;"></div>
<div style="left:667.72px;top:93.0px;width:16.32px;height:16.0px;background:#f0a21f;"></div>
<div style="left:684.84px;top:93.0px;width:16.32px;height:16.0px;background:#22e010;"></div>
<div style="left:701.96px;top:93.0px;width:16.32px;height:16.0px;background:#050505;"></div>
<div style="left:719.08px;top:93.0px;width:16.32px;height:16.0px;background:#22ee10;"></div>
<div style="left:736.2px;top:93.0px;width:16.32px;height:16.0px;background:#e6e6e6;"></div>
<div style="left:753.32px;top:93.0px;width:16.32px;height:16.0px;background:#121212;"></div>
<div style="left:770.44px;top:93.0px;width:16.32px;height:16.0px;background:#151515;"></div>
<div style="left:650.6px;top:109.8px;width:16.32px;height:9.6px;background:#232323;"></div>
<div style="left:667.72px;top:109.8px;width:16.32px;height:9.6px;background:#22e010;"></div>
<div style="left:684.84px;top:109.8px;width:16.32px;height:9.6px;background:#0a0a0a;"></div>
<div style="left:701.96px;top:109.8px;width:16.32px;height:9.6px;background:#c21c22;"></div>
<div style="left:719.08px;top:109.8px;width:16.32px;height:9.6px;background:#dcdcdc;"></div>
<div style="left:736.2px;top:109.8px;width:16.32px;height:9.6px;background:#22e010;"></div>
<div style="left:753.32px;top:109.8px;width:16.32px;height:9.6px;background:#f010a0;"></div>
<div style="left:770.44px;top:109.8px;width:16.32px;height:9.6px;background:#10e8f8;"></div>
<div style="left:650.4px;top:42.4px;width:16.720000000000002px;height:16.400000000000002px;background:transparent;border:1px solid #d86a66;"></div>
<div style="left:788px;top:42px;width:1.5px;height:78px;background:#5a5a5a;"></div>
<div style="left:651.2px;top:119.4px;width:139px;height:7.6px;background:#3f3f3f;"></div>
<div style="left:650.6px;top:119.8px;width:5.2px;height:5.6px;background:#a8a8a8;border-radius:0.8px;"></div>
<div class="t" style="left:651.7px;top:120.2px;font-size:5px;color:#3a3a3a;font-weight:bold;">H</div>
<div style="left:669.6px;top:119.8px;width:5.2px;height:5.6px;background:#a8a8a8;border-radius:0.8px;"></div>
<div class="t" style="left:670.7px;top:120.2px;font-size:5px;color:#3a3a3a;font-weight:bold;">S</div>
<div style="left:688.7px;top:119.8px;width:5.2px;height:5.6px;background:#a8a8a8;border-radius:0.8px;"></div>
<div class="t" style="left:689.8000000000001px;top:120.2px;font-size:5px;color:#3a3a3a;font-weight:bold;">V</div>
<div style="left:651.2px;top:126.6px;width:139px;height:1px;background:#2e2e2e;"></div>
<div style="left:651.2px;top:127.5px;width:139px;height:14px;background:#393939;"></div>
<div style="left:653px;top:130px;width:9.5px;height:8.7px;background:#303030;"></div>
<div style="left:655.3px;top:131.6px;width:5px;height:0.8px;background:#5a5a5a;"></div>
<div style="left:655.3px;top:133.6px;width:5px;height:0.8px;background:#5a5a5a;"></div>
<div style="left:655.3px;top:135.6px;width:5px;height:0.8px;background:#5a5a5a;"></div>
<div style="left:664px;top:131.5px;width:32.3px;height:10px;background:#4b4b4b;"></div>
<div style="left:696.8px;top:131.5px;width:17px;height:10px;background:#424242;"></div>
<div style="left:714.3px;top:131.5px;width:17.5px;height:10px;background:#424242;"></div>
<svg style="position:absolute;left:666.5px;top:131.5px;" width="13" height="10" viewBox="0 0 13 10"><path d="M6.5 1 L11 3.3 L6.5 5.6 L2 3.3 Z M2 5.3 L6.5 7.6 L11 5.3 M2 7.3 L6.5 9.6 L11 7.3" fill="none" stroke="#cfcfcf" stroke-width="1"/></svg>
<div class="t" style="left:680.7px;top:133.21px;font-size:7.68px;color:#e0e0e0;-webkit-text-stroke:0.25px #e0e0e0;transform:scaleX(0.762);transform-origin:0 0;">Capa</div>
<svg style="position:absolute;left:699px;top:132.5px;" width="12" height="8" viewBox="0 0 12 8"><path d="M6 1 L10.5 3.5 L6 6 L1.5 3.5 Z M1.5 5.5 L6 8" fill="none" stroke="#5e5e5e" stroke-width="1"/></svg>
<svg style="position:absolute;left:716.5px;top:132.5px;" width="13" height="8" viewBox="0 0 13 8"><rect x="1" y="1" width="11" height="6.5" rx="1" fill="none" stroke="#5e5e5e" stroke-width="1"/><path d="M3.5 4.5 H7" stroke="#5e5e5e"/></svg>
<div style="left:651.2px;top:141.5px;width:139px;height:48.2px;background:#474747;"></div>
<div style="left:651.4px;top:142.6px;width:23px;height:14.8px;background:#525252;border:1px solid #3c3c3c;border-radius:2px;"></div>
<div style="left:653.8px;top:145px;width:8px;height:8px;background:transparent;border:1px solid #7c7c7c;border-radius:1px;"></div>
<svg style="position:absolute;left:664.5px;top:147px;" width="8" height="5" viewBox="0 0 8 5"><path d="M1 1 L4 4 L7 1" fill="none" stroke="#9a9a9a" stroke-width="1"/></svg>
<div style="left:676px;top:142.6px;width:44.6px;height:14.8px;background:#525252;border:1px solid #3c3c3c;border-radius:2px;"></div>
<div class="t" style="left:684px;top:146.05px;font-size:7.39px;color:#d8d8d8;-webkit-text-stroke:0.1px #d8d8d8;transform:scaleX(0.882);transform-origin:0 0;">Normal</div>
<svg style="position:absolute;left:710px;top:147px;" width="9" height="5" viewBox="0 0 9 5"><path d="M1 1 L4.5 4.3 L8 1" fill="none" stroke="#a0a0a0" stroke-width="1"/></svg>
<div style="left:724.5px;top:145.8px;width:42.5px;height:6.5px;background:repeating-linear-gradient(90deg,#f0f0f0 0,#f0f0f0 2px,#c8c8c8 2px,#c8c8c8 3px);"></div>
<div style="left:767px;top:143.2px;width:1.8px;height:12.2px;background:#6a6a6a;"></div>
<div class="t" style="left:772px;top:144.90px;font-size:7.10px;color:#e0e0e0;-webkit-text-stroke:0.1px #e0e0e0;transform:scaleX(0.886);transform-origin:0 0;">100</div>
<svg style="position:absolute;left:783.5px;top:144.5px;" width="6" height="11" viewBox="0 0 6 11"><path d="M0.8 3.8 L3 1.3 L5.2 3.8 M0.8 6.8 L3 9.3 L5.2 6.8" fill="none" stroke="#a8a8a8" stroke-width="0.9"/></svg>
<svg style="position:absolute;left:670.5px;top:160px;" width="10" height="10" viewBox="0 0 10 10"><rect x="3" y="1" width="6" height="6" fill="none" stroke="#c8c8c8" stroke-width="1"/><rect x="1" y="3" width="6" height="6" fill="#8a8a8a" stroke="#c8c8c8" stroke-width="1"/></svg>
<svg style="position:absolute;left:687px;top:159.5px;" width="10" height="11" viewBox="0 0 10 11"><path d="M5 2 V10 M2.5 10 H7.5 M3.5 5 H6.5 V10 H3.5 Z M1 2 L3.5 4 M9 2 L6.5 4 M1 4.5 H3 M9 4.5 H7" fill="none" stroke="#c8c8c8" stroke-width="1"/></svg>
<svg style="position:absolute;left:704.5px;top:159.5px;" width="10" height="11" viewBox="0 0 10 11"><path d="M2 1.5 H5 V6 L7 8 L9 8 M2 1.5 V7 L4 9.5 H6" fill="none" stroke="#c8c8c8" stroke-width="1"/><rect x="2.5" y="2" width="2" height="3" fill="#c8c8c8"/></svg>
<svg style="position:absolute;left:722px;top:159.5px;" width="9" height="11" viewBox="0 0 9 11"><path d="M2.5 5 V3.5 A2 2 0 0 1 6.5 3.5 V5" fill="none" stroke="#d8d8d8" stroke-width="1.2"/><rect x="1" y="5" width="7" height="5" rx="0.8" fill="#d8d8d8"/></svg>
<svg style="position:absolute;left:739px;top:159.5px;" width="10" height="11" viewBox="0 0 10 11"><path d="M2 5 V4 A1.6 1.6 0 0 1 5.2 4 V5" fill="none" stroke="#d0d0d0" stroke-width="1"/><rect x="1" y="5" width="5" height="5" fill="#d0d0d0"/><rect x="6" y="1" width="2" height="2" fill="#d0d0d0"/><rect x="8" y="3" width="2" height="2" fill="#d0d0d0"/><rect x="6" y="5" width="2" height="2" fill="#d0d0d0"/><rect x="8" y="7" width="2" height="2" fill="#d0d0d0"/></svg>
<div style="left:752px;top:158.7px;width:17.7px;height:12.9px;background:#434343;"></div>
<div style="left:772px;top:158.7px;width:18px;height:12.9px;background:#434343;"></div>
<svg style="position:absolute;left:754px;top:159.5px;" width="15" height="11" viewBox="0 0 15 11"><rect x="1" y="2" width="7" height="7" fill="none" stroke="#6a6a6a" stroke-width="1.2"/><path d="M6 6 L10 10 M10 6 L6 10 M9 3 L11 5 L14 2" fill="none" stroke="#6a6a6a" stroke-width="1"/></svg>
<svg style="position:absolute;left:774px;top:159.5px;" width="15" height="11" viewBox="0 0 15 11"><path d="M1 2 H8 M1 2 V9 M1 9 L8 2 M6 6 L10 10 M10 6 L6 10 M9 3 L11 5 L14 2" fill="none" stroke="#6a6a6a" stroke-width="1.1"/></svg>
<svg style="position:absolute;left:660.5px;top:175.5px;" width="12" height="12" viewBox="0 0 12 12"><path d="M1 1 H9 V5 M1 1 V9 L4 10.5 H6" fill="none" stroke="#c8c8c8" stroke-width="1.1"/><circle cx="8.5" cy="8.5" r="2.3" fill="#474747" stroke="#c8c8c8" stroke-width="1"/></svg>
<svg style="position:absolute;left:676.5px;top:175.5px;" width="12" height="12" viewBox="0 0 12 12"><rect x="1" y="1" width="8.5" height="8.5" rx="1" fill="none" stroke="#c8c8c8" stroke-width="1"/><circle cx="5" cy="5" r="2" fill="none" stroke="#c8c8c8" stroke-width="0.9"/><circle cx="8.7" cy="8.7" r="2.3" fill="#474747" stroke="#c8c8c8" stroke-width="1"/></svg>
<svg style="position:absolute;left:692.5px;top:175.5px;" width="12" height="12" viewBox="0 0 12 12"><path d="M1 2 H4.5 L5.5 3 H10 V9.5 H1 Z" fill="#c8c8c8"/><circle cx="9" cy="9" r="2.3" fill="#474747" stroke="#c8c8c8" stroke-width="1"/></svg>
<svg style="position:absolute;left:709.5px;top:175.5px;" width="12" height="12" viewBox="0 0 12 12"><rect x="4" y="1" width="6" height="6" rx="1" fill="none" stroke="#6a6a6a" stroke-width="1"/><rect x="1" y="4.5" width="6" height="6" rx="1" fill="none" stroke="#6a6a6a" stroke-width="1"/></svg>
<svg style="position:absolute;left:726.5px;top:175.5px;" width="12" height="12" viewBox="0 0 12 12"><rect x="4.5" y="1" width="6" height="6" rx="1" fill="none" stroke="#6a6a6a" stroke-width="1"/><rect x="1" y="4.5" width="6" height="6" rx="1" fill="none" stroke="#6a6a6a" stroke-width="1"/></svg>
<svg style="position:absolute;left:743.5px;top:175.5px;" width="12" height="12" viewBox="0 0 12 12"><rect x="1" y="1" width="10" height="10" rx="1" fill="#d8d8d8"/><circle cx="6" cy="6" r="2.6" fill="#2a2a2a"/></svg>
<svg style="position:absolute;left:760.5px;top:175.5px;" width="12" height="12" viewBox="0 0 12 12"><rect x="1" y="3" width="10" height="7.5" rx="1" fill="none" stroke="#6a6a6a" stroke-width="1"/><path d="M1 2 H4" stroke="#6a6a6a"/><circle cx="7" cy="7" r="2" fill="none" stroke="#6a6a6a" stroke-width="1"/></svg>
<svg style="position:absolute;left:777px;top:175.5px;" width="11" height="12" viewBox="0 0 11 12"><path d="M1 2.5 H10 M3.5 2.5 V1 H7.5 V2.5 M2 3 L2.7 10.5 H8.3 L9 3 M4 4.5 V9 M5.5 4.5 V9 M7 4.5 V9" fill="none" stroke="#a8a8a8" stroke-width="0.9"/></svg>
<div style="left:651.2px;top:189.6px;width:139px;height:276px;background:#393939;"></div>
<div style="left:664.9px;top:189.6px;width:1.1px;height:276px;background:#2c2c2c;"></div>
<div style="left:679.2px;top:189.6px;width:1.1px;height:276px;background:#2c2c2c;"></div>
<div style="left:787.8px;top:189.6px;width:2.4px;height:276px;background:#444444;"></div>
<svg style="position:absolute;left:652.8px;top:194.5px;" width="11" height="8" viewBox="0 0 11 8"><path d="M0.8 4.2 Q5.5 -0.8 10.2 4.2" fill="none" stroke="#d4d4d4" stroke-width="1.1"/><path d="M1.5 4.5 Q5.5 7.5 9.5 4.5" fill="none" stroke="#a0a0a0" stroke-width="0.7"/><circle cx="5.5" cy="4.3" r="2" fill="#d8d8d8"/><circle cx="5.5" cy="4.3" r="0.8" fill="#444"/></svg>
<div style="left:668.7px;top:194.7px;width:7.6px;height:7.6px;background:#353535;border:1px solid #555555;border-radius:1.2px;"></div>
<svg style="position:absolute;left:683.5px;top:198.5px;" width="8" height="5" viewBox="0 0 8 5"><path d="M1 1 L4 4 L7 1" fill="none" stroke="#d0d0d0" stroke-width="1"/></svg>
<svg style="position:absolute;left:696px;top:194.5px;" width="12" height="10" viewBox="0 0 12 10"><path d="M0.8 1.5 H4.5 L5.5 2.5 H10.5 V9 H0.8 Z" fill="none" stroke="#d8d8d8" stroke-width="1"/><path d="M0.8 9 L2.5 4.5 H11.5 L10.5 9 Z" fill="#d8d8d8"/></svg>
<div class="t" style="left:713.1px;top:191.40px;font-size:7.10px;color:#d4d4d4;-webkit-text-stroke:0.1px #d4d4d4;transform:scaleX(0.858);transform-origin:0 0;">100 % Normal</div>
<div class="t" style="left:713.1px;top:198.94px;font-size:6.81px;color:#d4d4d4;-webkit-text-stroke:0.1px #d4d4d4;transform:scaleX(0.896);transform-origin:0 0;">Carpeta 2</div>
<div style="left:779.8px;top:197px;width:4px;height:1.1px;background:#2a2a2a;"></div>
<div style="left:779.8px;top:199px;width:4px;height:1.1px;background:#2a2a2a;"></div>
<div style="left:779.8px;top:201px;width:4px;height:1.1px;background:#2a2a2a;"></div>
<div style="left:679.3px;top:208.8px;width:108.5px;height:1.4px;background:#2b2b2b;"></div>
<div style="left:679.8px;top:209.5px;width:108px;height:32.5px;background:#5b6585;"></div>
<svg style="position:absolute;left:652.8px;top:222px;" width="11" height="8" viewBox="0 0 11 8"><path d="M0.8 4.2 Q5.5 -0.8 10.2 4.2" fill="none" stroke="#d4d4d4" stroke-width="1.1"/><path d="M1.5 4.5 Q5.5 7.5 9.5 4.5" fill="none" stroke="#a0a0a0" stroke-width="0.7"/><circle cx="5.5" cy="4.3" r="2" fill="#d8d8d8"/><circle cx="5.5" cy="4.3" r="0.8" fill="#444"/></svg>
<svg style="position:absolute;left:667.5px;top:220px;" width="11" height="10" viewBox="0 0 11 10"><path d="M1.5 9 H10 M1.5 9 L8.5 2" fill="none" stroke="#d0d0d0" stroke-width="1"/></svg>
<div style="left:692.4px;top:210.7px;width:41.2px;height:30.6px;background-color:#fff;background-image:linear-gradient(45deg,#d4d4d4 25%,transparent 25%,transparent 75%,#d4d4d4 75%),linear-gradient(45deg,#d4d4d4 25%,transparent 25%,transparent 75%,#d4d4d4 75%);background-size:4px 4px;background-position:0 0,2px 2px;border:1px solid #e8e8e8;"></div>
<div style="left:693.4px;top:211.7px;width:39.2px;height:28.6px;background:transparent;border:1px solid #1a1a1a;"></div>
<svg style="position:absolute;left:0;top:0" width="800" height="465" viewBox="0 0 800 465"><g fill="#111" transform="translate(700.30 218.00) scale(0.06325 0.05735) translate(-106.4 -165.6)"><path fill-rule="evenodd" d="M106.4,167.7 L124.5,167.7 L148.5,247.5 L172.7,167.7 L190.2,167.7 L155.4,271.8 L141.2,271.8 Z"/><path fill-rule="evenodd" d="M182.0,219.6 A41.2,54.0 0 1,0 264.4,219.6 A41.2,54.0 0 1,0 182.0,219.6 Z M197.8,219.8 A25.2,39.2 0 1,0 248.2,219.8 A25.2,39.2 0 1,0 197.8,219.8 Z"/><path fill-rule="evenodd" d="M262.2,167.7 L296,167.7 A31.8,31.6 0 0,1 296,230.9 L278.2,230.9 L278.2,271.8 L262.2,271.8 Z M278.2,182.7 L294,182.7 A16.4,16.35 0 0,1 294,215.4 L278.2,215.4 Z"/><path fill-rule="evenodd" d="M296,228 L312,219 L333.6,271.8 L314,271.8 Z"/><path fill-rule="evenodd" d="M319.3,167.7 L443.3,167.7 L443.3,182.7 L400.3,182.7 L400.3,211.5 L439.4,211.5 L439.4,225.7 L400.3,225.7 L400.3,257.4 L445,257.4 L445,271.8 L385.8,271.8 L385.8,182.7 L361.9,182.7 L361.9,271.8 L347.7,271.8 L347.7,182.7 L319.3,182.7 Z"/><path fill-rule="evenodd" d="M442.9,167.7 L459.6,167.7 L525.4,271.8 L506,271.8 Z"/><path fill-rule="evenodd" d="M504.7,167.7 L523.3,167.7 L455.8,271.8 L438,271.8 Z"/></g></svg>
<div class="t" style="left:738.5px;top:214.37px;font-size:6.67px;color:#d8dbe4;-webkit-text-stroke:0.05px #d8dbe4;transform:scaleX(0.833);transform-origin:0 0;">100 % Normal</div>
<div class="t" style="left:738.5px;top:232.17px;font-size:6.67px;color:#d8dbe4;-webkit-text-stroke:0.05px #d8dbe4;transform:scaleX(0.651);transform-origin:0 0;">VORTEX - copia</div>
<div style="left:779.5px;top:223.5px;width:4px;height:1.1px;background:#2f3548;"></div>
<div style="left:779.5px;top:225.5px;width:4px;height:1.1px;background:#2f3548;"></div>
<div style="left:779.5px;top:227.5px;width:4px;height:1.1px;background:#2f3548;"></div>
<div style="left:654.2px;top:254.7px;width:7.6px;height:7.6px;background:#353535;border:1px solid #555555;border-radius:1.2px;"></div>
<div style="left:668.7px;top:254.7px;width:7.6px;height:7.6px;background:#353535;border:1px solid #555555;border-radius:1.2px;"></div>
<div style="left:693.2px;top:243.3px;width:40px;height:31px;background-color:#fff;background-image:linear-gradient(45deg,#d4d4d4 25%,transparent 25%,transparent 75%,#d4d4d4 75%),linear-gradient(45deg,#d4d4d4 25%,transparent 25%,transparent 75%,#d4d4d4 75%);background-size:4px 4px;background-position:0 0,2px 2px;border:1px solid #2a2a2a;"></div>
<svg style="position:absolute;left:0;top:0" width="800" height="465" viewBox="0 0 800 465"><g fill="#111" transform="translate(700.30 251.50) scale(0.06325 0.05735) translate(-106.4 -165.6)"><path fill-rule="evenodd" d="M106.4,167.7 L124.5,167.7 L148.5,247.5 L172.7,167.7 L190.2,167.7 L155.4,271.8 L141.2,271.8 Z"/><path fill-rule="evenodd" d="M182.0,219.6 A41.2,54.0 0 1,0 264.4,219.6 A41.2,54.0 0 1,0 182.0,219.6 Z M197.8,219.8 A25.2,39.2 0 1,0 248.2,219.8 A25.2,39.2 0 1,0 197.8,219.8 Z"/><path fill-rule="evenodd" d="M262.2,167.7 L296,167.7 A31.8,31.6 0 0,1 296,230.9 L278.2,230.9 L278.2,271.8 L262.2,271.8 Z M278.2,182.7 L294,182.7 A16.4,16.35 0 0,1 294,215.4 L278.2,215.4 Z"/><path fill-rule="evenodd" d="M296,228 L312,219 L333.6,271.8 L314,271.8 Z"/><path fill-rule="evenodd" d="M319.3,167.7 L443.3,167.7 L443.3,182.7 L400.3,182.7 L400.3,211.5 L439.4,211.5 L439.4,225.7 L400.3,225.7 L400.3,257.4 L445,257.4 L445,271.8 L385.8,271.8 L385.8,182.7 L361.9,182.7 L361.9,271.8 L347.7,271.8 L347.7,182.7 L319.3,182.7 Z"/><path fill-rule="evenodd" d="M442.9,167.7 L459.6,167.7 L525.4,271.8 L506,271.8 Z"/><path fill-rule="evenodd" d="M504.7,167.7 L523.3,167.7 L455.8,271.8 L438,271.8 Z"/></g></svg>
<div class="t" style="left:738.5px;top:247.48px;font-size:7.25px;color:#d4d4d4;-webkit-text-stroke:0.05px #d4d4d4;transform:scaleX(0.767);transform-origin:0 0;">100 % Normal</div>
<div class="t" style="left:738.5px;top:265.48px;font-size:7.25px;color:#d4d4d4;-webkit-text-stroke:0.05px #d4d4d4;transform:scaleX(0.646);transform-origin:0 0;">VORTEX - copia</div>
<div style="left:779.5px;top:256px;width:4px;height:1.1px;background:#2a2a2a;"></div>
<div style="left:779.5px;top:258px;width:4px;height:1.1px;background:#2a2a2a;"></div>
<div style="left:779.5px;top:260px;width:4px;height:1.1px;background:#2a2a2a;"></div>
<div style="left:679.3px;top:275.40000000000003px;width:108.5px;height:1.4px;background:#2b2b2b;"></div>
<div style="left:653.7px;top:288.7px;width:7.6px;height:7.6px;background:#353535;border:1px solid #555555;border-radius:1.2px;"></div>
<div style="left:669.3000000000001px;top:288.7px;width:7.6px;height:7.6px;background:#353535;border:1px solid #555555;border-radius:1.2px;"></div>
<div style="left:693.6px;top:277.6px;width:38.8px;height:28.6px;background-color:#fff;background-image:linear-gradient(45deg,#d4d4d4 25%,transparent 25%,transparent 75%,#d4d4d4 75%),linear-gradient(45deg,#d4d4d4 25%,transparent 25%,transparent 75%,#d4d4d4 75%);background-size:4px 4px;background-position:0 0,2px 2px;border:1px solid #2a2a2a;"></div>
<svg style="position:absolute;left:0;top:0" width="800" height="465" viewBox="0 0 800 465"><g fill="#111" transform="translate(694.40 288.00) scale(0.09021 0.08511) translate(-106.4 -165.6)"><path fill-rule="evenodd" d="M106.4,167.7 L124.5,167.7 L148.5,247.5 L172.7,167.7 L190.2,167.7 L155.4,271.8 L141.2,271.8 Z"/><path fill-rule="evenodd" d="M182.0,219.6 A41.2,54.0 0 1,0 264.4,219.6 A41.2,54.0 0 1,0 182.0,219.6 Z M197.8,219.8 A25.2,39.2 0 1,0 248.2,219.8 A25.2,39.2 0 1,0 197.8,219.8 Z"/><path fill-rule="evenodd" d="M262.2,167.7 L296,167.7 A31.8,31.6 0 0,1 296,230.9 L278.2,230.9 L278.2,271.8 L262.2,271.8 Z M278.2,182.7 L294,182.7 A16.4,16.35 0 0,1 294,215.4 L278.2,215.4 Z"/><path fill-rule="evenodd" d="M296,228 L312,219 L333.6,271.8 L314,271.8 Z"/><path fill-rule="evenodd" d="M319.3,167.7 L443.3,167.7 L443.3,182.7 L400.3,182.7 L400.3,211.5 L439.4,211.5 L439.4,225.7 L400.3,225.7 L400.3,257.4 L445,257.4 L445,271.8 L385.8,271.8 L385.8,182.7 L361.9,182.7 L361.9,271.8 L347.7,271.8 L347.7,182.7 L319.3,182.7 Z"/><path fill-rule="evenodd" d="M442.9,167.7 L459.6,167.7 L525.4,271.8 L506,271.8 Z"/><path fill-rule="evenodd" d="M504.7,167.7 L523.3,167.7 L455.8,271.8 L438,271.8 Z"/></g></svg>
<div style="left:740.9px;top:278.2px;width:9.8px;height:9.6px;background:#f4f4f4;"></div>
<svg style="position:absolute;left:740.9px;top:278.2px;" width="10" height="10" viewBox="0 0 10 10"><path d="M1.3 8.8 L4.5 1.2 L7.4 7.6 M2.5 6 H6" fill="none" stroke="#222" stroke-width="0.9"/><rect x="7" y="7" width="2.6" height="2.4" fill="#666"/></svg>
<div class="t" style="left:753.3px;top:280.63px;font-size:7.54px;color:#d4d4d4;-webkit-text-stroke:0.05px #d4d4d4;transform:scaleX(0.706);transform-origin:0 0;">100 % N</div>
<div class="t" style="left:738.5px;top:297.83px;font-size:7.54px;color:#d4d4d4;-webkit-text-stroke:0.1px #d4d4d4;transform:scaleX(0.758);transform-origin:0 0;">VORTEX</div>
<div style="left:779.5px;top:290.5px;width:4px;height:1.1px;background:#2a2a2a;"></div>
<div style="left:779.5px;top:292.5px;width:4px;height:1.1px;background:#2a2a2a;"></div>
<div style="left:779.5px;top:294.5px;width:4px;height:1.1px;background:#2a2a2a;"></div>
<div style="left:679.3px;top:308.8px;width:108.5px;height:1.4px;background:#2b2b2b;"></div>
<svg style="position:absolute;left:652.8px;top:321.3px;" width="11" height="8" viewBox="0 0 11 8"><path d="M0.8 4.2 Q5.5 -0.8 10.2 4.2" fill="none" stroke="#d4d4d4" stroke-width="1.1"/><path d="M1.5 4.5 Q5.5 7.5 9.5 4.5" fill="none" stroke="#a0a0a0" stroke-width="0.7"/><circle cx="5.5" cy="4.3" r="2" fill="#d8d8d8"/><circle cx="5.5" cy="4.3" r="0.8" fill="#444"/></svg>
<div style="left:669.3000000000001px;top:321.7px;width:7.6px;height:7.6px;background:#353535;border:1px solid #555555;border-radius:1.2px;"></div>
<div style="left:693.6px;top:311.6px;width:38.8px;height:27.8px;background:#e0e0e0;border:1px solid #2a2a2a;"></div>
<div class="t" style="left:738.5px;top:314.12px;font-size:6.96px;color:#d4d4d4;-webkit-text-stroke:0.05px #d4d4d4;transform:scaleX(0.799);transform-origin:0 0;">100 % Normal</div>
<div class="t" style="left:738.5px;top:331.48px;font-size:7.25px;color:#d4d4d4;-webkit-text-stroke:0.1px #d4d4d4;transform:scaleX(0.854);transform-origin:0 0;">Capa 14</div>
<div style="left:779.5px;top:323.5px;width:4px;height:1.1px;background:#2a2a2a;"></div>
<div style="left:779.5px;top:325.5px;width:4px;height:1.1px;background:#2a2a2a;"></div>
<div style="left:779.5px;top:327.5px;width:4px;height:1.1px;background:#2a2a2a;"></div>
<div style="left:679.3px;top:342.0px;width:108.5px;height:1.4px;background:#2b2b2b;"></div>
<div style="left:653.7px;top:348.2px;width:7.6px;height:7.6px;background:#353535;border:1px solid #555555;border-radius:1.2px;"></div>
<div style="left:669.3000000000001px;top:348.2px;width:7.6px;height:7.6px;background:#353535;border:1px solid #555555;border-radius:1.2px;"></div>
<svg style="position:absolute;left:685px;top:347.8px;" width="6" height="8" viewBox="0 0 6 8"><path d="M1.2 1 L4.3 4 L1.2 7" fill="none" stroke="#c4c4c4" stroke-width="1"/></svg>
<svg style="position:absolute;left:696.5px;top:347.0px;" width="10" height="9" viewBox="0 0 10 9"><path d="M0.5 0.5 H4 L5 1.6 H9.2 V8.3 H0.5 Z" fill="#d2d2d2"/><path d="M0.8 2.6 H9" stroke="#3a3a3a" stroke-width="0.6"/></svg>
<div class="t" style="left:713.1px;top:344.22px;font-size:6.96px;color:#d4d4d4;-webkit-text-stroke:0.1px #d4d4d4;transform:scaleX(0.871);transform-origin:0 0;">100 % Normal</div>
<div class="t" style="left:713.1px;top:351.64px;font-size:6.81px;color:#d4d4d4;-webkit-text-stroke:0.1px #d4d4d4;transform:scaleX(0.877);transform-origin:0 0;">11</div>
<div style="left:779.8px;top:349.8px;width:4px;height:1.1px;background:#2a2a2a;"></div>
<div style="left:779.8px;top:351.8px;width:4px;height:1.1px;background:#2a2a2a;"></div>
<div style="left:779.8px;top:353.8px;width:4px;height:1.1px;background:#2a2a2a;"></div>
<div style="left:651.2px;top:361.6px;width:137px;height:1.4px;background:#2b2b2b;"></div>
<div style="left:653.7px;top:367.8px;width:7.6px;height:7.6px;background:#353535;border:1px solid #555555;border-radius:1.2px;"></div>
<div style="left:669.3000000000001px;top:367.8px;width:7.6px;height:7.6px;background:#353535;border:1px solid #555555;border-radius:1.2px;"></div>
<svg style="position:absolute;left:685px;top:367.40000000000003px;" width="6" height="8" viewBox="0 0 6 8"><path d="M1.2 1 L4.3 4 L1.2 7" fill="none" stroke="#c4c4c4" stroke-width="1"/></svg>
<svg style="position:absolute;left:696.5px;top:366.6px;" width="10" height="9" viewBox="0 0 10 9"><path d="M0.5 0.5 H4 L5 1.6 H9.2 V8.3 H0.5 Z" fill="#d2d2d2"/><path d="M0.8 2.6 H9" stroke="#3a3a3a" stroke-width="0.6"/></svg>
<div class="t" style="left:713.1px;top:363.82px;font-size:6.96px;color:#d4d4d4;-webkit-text-stroke:0.1px #d4d4d4;transform:scaleX(0.871);transform-origin:0 0;">100 % Normal</div>
<div class="t" style="left:713.1px;top:371.24px;font-size:6.81px;color:#d4d4d4;-webkit-text-stroke:0.1px #d4d4d4;transform:scaleX(0.818);transform-origin:0 0;">10</div>
<div style="left:779.8px;top:369.40000000000003px;width:4px;height:1.1px;background:#2a2a2a;"></div>
<div style="left:779.8px;top:371.40000000000003px;width:4px;height:1.1px;background:#2a2a2a;"></div>
<div style="left:779.8px;top:373.40000000000003px;width:4px;height:1.1px;background:#2a2a2a;"></div>
<div style="left:651.2px;top:381.1px;width:137px;height:1.4px;background:#2b2b2b;"></div>
<div style="left:653.7px;top:387.3px;width:7.6px;height:7.6px;background:#353535;border:1px solid #555555;border-radius:1.2px;"></div>
<div style="left:669.3000000000001px;top:387.3px;width:7.6px;height:7.6px;background:#353535;border:1px solid #555555;border-radius:1.2px;"></div>
<svg style="position:absolute;left:685px;top:386.90000000000003px;" width="6" height="8" viewBox="0 0 6 8"><path d="M1.2 1 L4.3 4 L1.2 7" fill="none" stroke="#c4c4c4" stroke-width="1"/></svg>
<svg style="position:absolute;left:696.5px;top:386.1px;" width="10" height="9" viewBox="0 0 10 9"><path d="M0.5 0.5 H4 L5 1.6 H9.2 V8.3 H0.5 Z" fill="#d2d2d2"/><path d="M0.8 2.6 H9" stroke="#3a3a3a" stroke-width="0.6"/></svg>
<div class="t" style="left:713.1px;top:383.32px;font-size:6.96px;color:#d4d4d4;-webkit-text-stroke:0.1px #d4d4d4;transform:scaleX(0.871);transform-origin:0 0;">100 % Normal</div>
<div class="t" style="left:713.1px;top:390.74px;font-size:6.81px;color:#d4d4d4;-webkit-text-stroke:0.1px #d4d4d4;transform:scaleX(0.871);transform-origin:0 0;">9</div>
<div style="left:779.8px;top:388.90000000000003px;width:4px;height:1.1px;background:#2a2a2a;"></div>
<div style="left:779.8px;top:390.90000000000003px;width:4px;height:1.1px;background:#2a2a2a;"></div>
<div style="left:779.8px;top:392.90000000000003px;width:4px;height:1.1px;background:#2a2a2a;"></div>
<div style="left:651.2px;top:400.7px;width:137px;height:1.4px;background:#2b2b2b;"></div>
<div style="left:653.7px;top:406.9px;width:7.6px;height:7.6px;background:#353535;border:1px solid #555555;border-radius:1.2px;"></div>
<div style="left:669.3000000000001px;top:406.9px;width:7.6px;height:7.6px;background:#353535;border:1px solid #555555;border-radius:1.2px;"></div>
<svg style="position:absolute;left:685px;top:406.5px;" width="6" height="8" viewBox="0 0 6 8"><path d="M1.2 1 L4.3 4 L1.2 7" fill="none" stroke="#c4c4c4" stroke-width="1"/></svg>
<svg style="position:absolute;left:696.5px;top:405.7px;" width="10" height="9" viewBox="0 0 10 9"><path d="M0.5 0.5 H4 L5 1.6 H9.2 V8.3 H0.5 Z" fill="#d2d2d2"/><path d="M0.8 2.6 H9" stroke="#3a3a3a" stroke-width="0.6"/></svg>
<div class="t" style="left:713.1px;top:402.92px;font-size:6.96px;color:#d4d4d4;-webkit-text-stroke:0.1px #d4d4d4;transform:scaleX(0.871);transform-origin:0 0;">100 % Normal</div>
<div class="t" style="left:713.1px;top:410.34px;font-size:6.81px;color:#d4d4d4;-webkit-text-stroke:0.1px #d4d4d4;transform:scaleX(0.871);transform-origin:0 0;">8</div>
<div style="left:779.8px;top:408.5px;width:4px;height:1.1px;background:#2a2a2a;"></div>
<div style="left:779.8px;top:410.5px;width:4px;height:1.1px;background:#2a2a2a;"></div>
<div style="left:779.8px;top:412.5px;width:4px;height:1.1px;background:#2a2a2a;"></div>
<div style="left:651.2px;top:420.2px;width:137px;height:1.4px;background:#2b2b2b;"></div>
<div style="left:653.7px;top:426.4px;width:7.6px;height:7.6px;background:#353535;border:1px solid #555555;border-radius:1.2px;"></div>
<div style="left:669.3000000000001px;top:426.4px;width:7.6px;height:7.6px;background:#353535;border:1px solid #555555;border-radius:1.2px;"></div>
<svg style="position:absolute;left:685px;top:426.0px;" width="6" height="8" viewBox="0 0 6 8"><path d="M1.2 1 L4.3 4 L1.2 7" fill="none" stroke="#c4c4c4" stroke-width="1"/></svg>
<svg style="position:absolute;left:696.5px;top:425.2px;" width="10" height="9" viewBox="0 0 10 9"><path d="M0.5 0.5 H4 L5 1.6 H9.2 V8.3 H0.5 Z" fill="#d2d2d2"/><path d="M0.8 2.6 H9" stroke="#3a3a3a" stroke-width="0.6"/></svg>
<div class="t" style="left:713.1px;top:422.42px;font-size:6.96px;color:#d4d4d4;-webkit-text-stroke:0.1px #d4d4d4;transform:scaleX(0.871);transform-origin:0 0;">100 % Normal</div>
<div class="t" style="left:713.1px;top:429.84px;font-size:6.81px;color:#d4d4d4;-webkit-text-stroke:0.1px #d4d4d4;transform:scaleX(0.871);transform-origin:0 0;">7</div>
<div style="left:779.8px;top:428.0px;width:4px;height:1.1px;background:#2a2a2a;"></div>
<div style="left:779.8px;top:430.0px;width:4px;height:1.1px;background:#2a2a2a;"></div>
<div style="left:779.8px;top:432.0px;width:4px;height:1.1px;background:#2a2a2a;"></div>
<div style="left:651.2px;top:439.8px;width:137px;height:1.4px;background:#2b2b2b;"></div>
<div style="left:653.7px;top:446.0px;width:7.6px;height:7.6px;background:#353535;border:1px solid #555555;border-radius:1.2px;"></div>
<div style="left:669.3000000000001px;top:446.0px;width:7.6px;height:7.6px;background:#353535;border:1px solid #555555;border-radius:1.2px;"></div>
<svg style="position:absolute;left:685px;top:445.6px;" width="6" height="8" viewBox="0 0 6 8"><path d="M1.2 1 L4.3 4 L1.2 7" fill="none" stroke="#c4c4c4" stroke-width="1"/></svg>
<svg style="position:absolute;left:696.5px;top:444.8px;" width="10" height="9" viewBox="0 0 10 9"><path d="M0.5 0.5 H4 L5 1.6 H9.2 V8.3 H0.5 Z" fill="#d2d2d2"/><path d="M0.8 2.6 H9" stroke="#3a3a3a" stroke-width="0.6"/></svg>
<div class="t" style="left:713.1px;top:442.02px;font-size:6.96px;color:#d4d4d4;-webkit-text-stroke:0.1px #d4d4d4;transform:scaleX(0.871);transform-origin:0 0;">100 % Normal</div>
<div class="t" style="left:713.1px;top:449.44px;font-size:6.81px;color:#d4d4d4;-webkit-text-stroke:0.1px #d4d4d4;transform:scaleX(0.871);transform-origin:0 0;">6</div>
<div style="left:779.8px;top:447.6px;width:4px;height:1.1px;background:#2a2a2a;"></div>
<div style="left:779.8px;top:449.6px;width:4px;height:1.1px;background:#2a2a2a;"></div>
<div style="left:779.8px;top:451.6px;width:4px;height:1.1px;background:#2a2a2a;"></div>
<div style="left:651.2px;top:459.3px;width:137px;height:1.4px;background:#2b2b2b;"></div>
<div class="t" style="left:713.1px;top:461.52px;font-size:6.96px;color:#d4d4d4;-webkit-text-stroke:0.1px #d4d4d4;transform:scaleX(0.871);transform-origin:0 0;">100 % Normal</div>
<div style="left:651px;top:459.8px;width:13.5px;height:3.4px;background:#6e6ef2;"></div>
<div style="left:666px;top:459.8px;width:13.5px;height:3.4px;background:#6e6ef2;"></div>
<div style="left:790.2px;top:28.3px;width:9.8px;height:437px;background:#383838;"></div>
<div style="left:795.8px;top:111.5px;width:4.2px;height:50.5px;background:#5c5c5c;border-radius:2px 0 0 2px;"></div>
<div style="left:785px;top:358.5px;width:30px;height:30px;border-radius:50%;background:#3a3a3a;border:1.5px solid #e0e0e0;"></div>
<svg style="position:absolute;left:787px;top:366px;" width="13" height="15" viewBox="0 0 13 15"><path d="M4.5 4 L1.5 7.5 L4.5 11" fill="none" stroke="#e0e0e0" stroke-width="1.2"/><rect x="7.5" y="1.5" width="6" height="12" rx="1" fill="none" stroke="#e0e0e0" stroke-width="1.2"/></svg>
<div style="left:648px;top:0px;width:116px;height:13.2px;background:#363636;"></div>
<div style="left:654px;top:3px;width:5px;height:5px;background:#444;"></div>
<div class="t" style="left:691.2px;top:1.86px;font-size:6.09px;color:#b8b8b8;-webkit-text-stroke:0.15px #b8b8b8;transform:scaleX(0.962);transform-origin:0 0;">Información</div>
<div style="left:745px;top:6.4px;width:5.8px;height:0.9px;background:#c8c8c8;"></div>
<svg style="position:absolute;left:754.2px;top:1.9px;" width="6.5" height="6.5" viewBox="0 0 6.5 6.5"><path d="M0.7 0.7 L5.6 5.6 M5.6 0.7 L0.7 5.6" stroke="#cfcfcf" stroke-width="0.9"/></svg>
<svg style="position:absolute;left:0px;top:0px;" width="800" height="465" viewBox="0 0 800 465"><path fill="#151515" fill-rule="nonzero" d="M106.4,167.7 L124.5,167.7 L148.5,247.5 L172.7,167.7 L190.2,167.7 L155.4,271.8 L141.2,271.8 Z"/><path fill="#151515" fill-rule="evenodd" d="M182.0,219.6 A41.2,54.0 0 1,0 264.4,219.6 A41.2,54.0 0 1,0 182.0,219.6 Z M197.8,219.8 A25.2,39.2 0 1,0 248.2,219.8 A25.2,39.2 0 1,0 197.8,219.8 Z"/><path fill="#151515" fill-rule="evenodd" d="M262.2,167.7 L296,167.7 A31.8,31.6 0 0,1 296,230.9 L278.2,230.9 L278.2,271.8 L262.2,271.8 Z M278.2,182.7 L294,182.7 A16.4,16.35 0 0,1 294,215.4 L278.2,215.4 Z"/><path fill="#151515" d="M296,228 L312,219 L333.6,271.8 L314,271.8 Z"/><path fill="#151515" d="M319.3,167.7 L443.3,167.7 L443.3,182.7 L400.3,182.7 L400.3,211.5 L439.4,211.5 L439.4,225.7 L400.3,225.7 L400.3,257.4 L445,257.4 L445,271.8 L385.8,271.8 L385.8,182.7 L361.9,182.7 L361.9,271.8 L347.7,271.8 L347.7,182.7 L319.3,182.7 Z"/><path fill="#151515" d="M442.9,167.7 L459.6,167.7 L525.4,271.8 L506,271.8 Z"/><path fill="#151515" d="M504.7,167.7 L523.3,167.7 L455.8,271.8 L438,271.8 Z"/></svg>
<div style="left:25.8px;top:462.6px;width:570.4px;height:1px;background:#f2f2f2;"></div>
<div style="left:17.3px;top:463.6px;width:579px;height:1.4px;background:#6e6e6e;"></div>
<div style="left:7px;top:428px;width:29.6px;height:29.6px;border-radius:50%;background:rgba(48,48,48,0.85);border:1.3px solid #c4c4c4;"></div>
<svg style="position:absolute;left:11.5px;top:432.5px;" width="21" height="21" viewBox="0 0 21 21"><path d="M6 5.2 A7 7 0 0 1 16.2 6.5 M15 15.8 A7 7 0 0 1 4.8 14.5" fill="none" stroke="#e4e4e4" stroke-width="1.3"/><path d="M2.2 8.2 L6.8 8.2 L4.5 11.2 Z M18.8 12.8 L14.2 12.8 L16.5 9.8 Z" fill="#e8e8e8"/><rect x="7.6" y="5.6" width="5.8" height="9.8" fill="#ececec"/><path d="M12.3 6.8 L8.7 14.2" stroke="#303030" stroke-width="1.1"/></svg>
</body></html>
